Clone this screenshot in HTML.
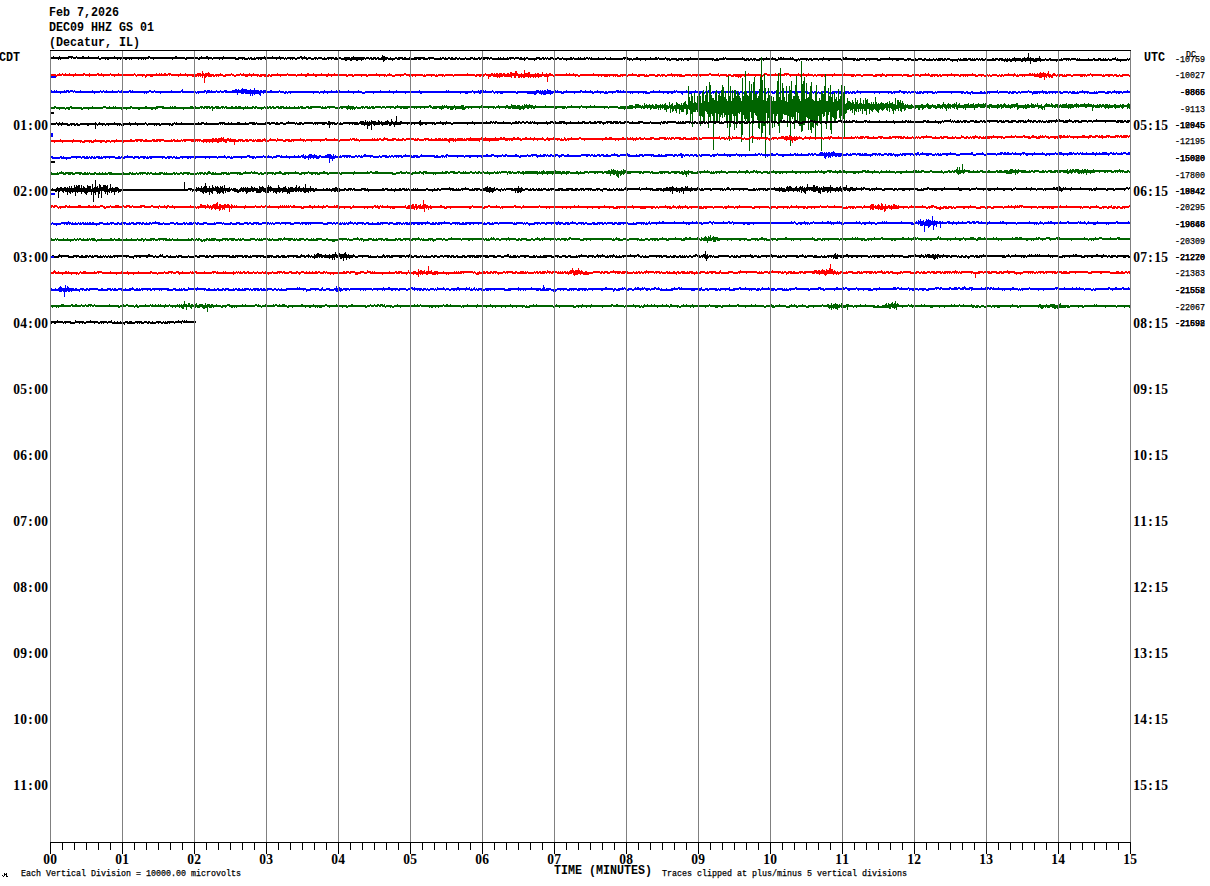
<!DOCTYPE html>
<html><head><meta charset="utf-8"><style>
html,body{margin:0;padding:0;background:#fff;}
body{width:1210px;height:886px;position:relative;overflow:hidden;}
.mb{position:absolute;font-family:"Liberation Mono",monospace;font-weight:bold;font-size:13px;line-height:13px;white-space:pre;transform:scaleX(0.897);transform-origin:0 0;margin-top:-1px;margin-left:-1px;color:#000}
.sd{position:absolute;font-family:"Liberation Serif",serif;font-weight:bold;font-size:13.5px;line-height:14px;white-space:pre;margin-top:-3px;margin-left:-1px;transform:scaleY(1.12);transform-origin:0 0;color:#000}
.sd span{display:inline-block;width:7px;text-align:center}
.sm{position:absolute;font-family:"Liberation Mono",monospace;font-size:9.5px;line-height:9px;white-space:pre;transform:scaleX(0.877);transform-origin:0 0;margin-top:0px;margin-left:-1px;color:#000;-webkit-text-stroke:0.25px #000}
</style></head><body>
<svg width="1210" height="886" style="position:absolute;left:0;top:0"><path d="M50 57h3V56h1V57h5V56h1V57h8V56h5V57h3V56h1V57h5V56h2V57h4V56h1V57h9V56h1V58h2V57h13V56h1V57h33V56h2V57h25V56h2V57h8V58h1V57h12V58h1V57h2V56h1V57h4V56h2V57h4V58h1V57h10V56h1V57h12V58h2V57h7V58h3V57h1V58h1V57h2V58h2V57h1V58h1V57h8V56h1V57h7V56h1V57h6V56h1V57h4V58h1V57h1V58h1V57h8V58h2V57h3V56h2V57h2V56h1V57h2V58h1V57h3V58h3V57h3V58h1V57h4V58h2V57h1V58h2V57h7V58h1V57h2V58h2V57h2V58h3V57h6V58h1V57h2V56h1V57h11V58h1V57h3V58h1V57h2V58h1V57h3V58h1V57h2V58h2V57h1V55h1V56h2V57h3V58h2V57h1V58h4V57h2V58h1V57h5V58h1V57h2V58h3V57h1V58h4V57h11V58h3V57h6V58h6V57h1V58h1V57h2V58h1V57h1V58h2V57h2V58h1V57h2V58h2V57h2V58h2V57h1V58h5V57h1V58h4V57h3V58h1V57h1V58h3V57h2V58h1V57h8V58h1V57h2V58h6V57h1V58h1V57h1V58h2V57h1V58h3V57h1V58h1V57h5V58h1V57h4V58h1V57h2V58h2V57h1V58h1V57h2V58h8V57h4V58h2V57h2V58h1V57h1V58h1V57h1V58h2V57h3V58h4V57h2V58h3V57h1V58h7V57h2V58h1V57h1V58h4V57h1V58h1V57h1V58h3V57h1V58h1V57h2V58h1V57h1V58h1V57h1V58h6V57h1V58h6V57h1V58h4V57h1V58h12V57h5V58h4V59h1V58h3V57h2V58h12V57h1V58h4V57h2V58h1V57h1V58h6V57h1V58h4V59h1V58h6V59h1V58h5V59h1V58h6V57h1V58h23V59h2V58h2V59h1V58h4V57h1V58h1V57h1V58h16V57h1V58h2V59h1V58h3V59h1V58h2V59h1V58h3V59h3V58h7V57h1V58h5V57h1V58h3V59h2V57h1V58h1V57h2V58h1V57h1V58h6V57h1V58h1V57h1V58h1V59h4V58h1V59h1V58h8V59h1V58h3V59h1V58h5V59h1V58h4V57h1V58h17V59h1V58h1V57h1V58h1V57h2V58h9V59h1V58h1V59h1V58h6V59h1V58h12V59h2V58h9V57h1V58h14V59h3V58h4V59h3V58h2V59h2V58h4V59h2V58h2V59h3V58h1V59h3V58h1V59h2V58h1V59h1V58h5V59h1V58h2V59h1V58h3V59h8V58h1V59h1V58h1V59h2V58h4V59h1V58h3V59h1V58h1V59h1V58h1V59h1V58h2V59h1V58h1V59h1V58h2V59h2V58h2V59h5V58h2V59h1V58h3V59h1V58h4V59h2V58h1V59h1V58h1V59h1V58h1V59h2V58h2V57h1V58h6V59h1V58h2V57h1V58h2V57h1V53h1V58h1V57h1V58h3V59h1V58h4V56h1V58h1V59h4V58h1V59h3V58h2V59h7V58h1V59h2V58h1V59h1V58h7V59h1V58h5V59h1V58h1V59h1V58h1V59h8V58h1V59h4V58h2V59h3V58h3V59h2V58h1V59h1V58h1V59h2V58h1V59h3V58h3V57h1V59h1V58h1V59h9V58h1V59h1V58h1V60h-1V61h-1V60h-1V61h-6V62h-1V61h-4V60h-4V61h-3V60h-1V61h-8V60h-1V61h-5V60h-1V61h-17V60h-5V61h-1V60h-1V61h-1V60h-1V61h-1V60h-3V61h-6V62h-1V61h-6V60h-1V61h-3V60h-1V61h-4V62h-1V61h-3V62h-4V61h-2V64h-1V61h-4V62h-1V61h-2V62h-2V61h-5V62h-1V61h-3V62h-2V61h-2V62h-2V61h-1V62h-1V61h-3V60h-1V61h-2V60h-2V61h-10V60h-1V61h-3V60h-1V61h-1V60h-1V61h-1V60h-2V61h-6V60h-2V61h-9V60h-1V62h-1V61h-4V62h-1V61h-2V60h-3V61h-1V60h-1V61h-3V60h-1V61h-4V60h-1V61h-2V60h-1V61h-7V60h-1V61h-3V60h-4V61h-3V60h-1V61h-3V60h-2V61h-1V60h-1V61h-3V60h-5V61h-3V60h-3V61h-1V60h-11V61h-4V60h-7V61h-1V60h-2V61h-2V60h-5V61h-4V60h-1V61h-2V60h-10V61h-2V60h-11V61h-2V60h-5V61h-1V60h-3V61h-1V60h-5V61h-2V60h-2V61h-1V60h-1V61h-1V60h-6V61h-1V60h-1V61h-1V62h-1V61h-2V60h-16V61h-3V60h-11V61h-1V60h-3V61h-4V60h-1V61h-1V60h-1V61h-1V60h-2V61h-2V60h-1V61h-3V60h-18V59h-1V60h-6V61h-5V60h-1V61h-1V60h-23V61h-2V60h-3V61h-1V60h-1V61h-1V60h-2V61h-3V60h-5V61h-2V60h-1V61h-1V60h-1V59h-1V60h-6V59h-1V60h-12V61h-1V60h-4V61h-1V60h-7V61h-1V60h-2V61h-1V60h-2V59h-2V60h-1V59h-1V60h-17V59h-1V60h-15V59h-1V60h-1V59h-2V60h-12V59h-1V60h-6V61h-1V60h-3V59h-1V60h-3V59h-2V60h-4V59h-2V60h-3V59h-1V60h-1V59h-1V60h-2V59h-1V60h-3V59h-2V60h-2V61h-1V60h-6V59h-2V60h-1V61h-1V60h-5V59h-4V60h-1V59h-3V60h-1V59h-1V60h-17V59h-2V60h-1V59h-1V60h-1V59h-2V60h-2V59h-2V60h-2V59h-1V60h-5V59h-2V60h-5V59h-1V60h-5V59h-1V60h-2V59h-1V60h-6V59h-2V60h-4V59h-2V60h-8V59h-4V60h-1V59h-1V60h-5V59h-2V60h-3V59h-1V60h-15V59h-2V60h-3V59h-2V60h-2V61h-1V60h-4V59h-1V60h-2V61h-1V62h-1V60h-5V59h-1V60h-2V59h-1V60h-3V59h-1V60h-1V59h-3V60h-1V59h-1V60h-2V61h-1V60h-3V61h-2V60h-4V61h-2V60h-3V61h-2V60h-4V59h-2V60h-5V59h-2V60h-1V59h-2V60h-1V59h-1V60h-5V59h-4V60h-1V59h-1V60h-1V59h-1V60h-3V59h-3V60h-2V59h-3V60h-1V59h-1V58h-1V59h-3V60h-2V59h-2V60h-1V59h-1V60h-1V59h-3V60h-1V59h-1V60h-1V59h-3V60h-1V59h-3V60h-1V59h-10V60h-1V59h-3V60h-2V59h-1V60h-1V59h-2V60h-5V59h-1V60h-1V59h-1V60h-4V59h-1V60h-1V59h-3V60h-4V59h-12V60h-1V59h-2V60h-1V59h-6V60h-1V59h-3V60h-1V59h-8V60h-2V59h-11V60h-2V59h-12V60h-1V59h-18V60h-1V59h-3V58h-1V59h-3V60h-1V59h-1V60h-1V59h-1V60h-1V59h-2V60h-1V59h-6V60h-1V59h-1V60h-1V59h-2V60h-2V59h-4V60h-1V59h-2V60h-1V59h-8V60h-2V59h-1V60h-1V59h-4V60h-2V59h-22V58h-1V59h-3V58h-1V59h-1V58h-2V59h-8V60h-1V59h-1V60h-1V59h-8z" fill="#000000" shape-rendering="crispEdges"/><path d="M50 74h6V75h1V74h2V73h1V74h2V73h1V74h2V73h1V74h3V73h1V74h5V73h1V74h7V73h2V74h4V73h1V74h7V73h2V74h2V73h1V74h8V73h1V74h7V73h1V74h15V73h1V74h1V75h1V74h8V75h1V74h10V73h1V74h2V73h1V74h1V73h1V74h2V73h2V74h2V73h3V74h9V73h1V74h4V73h1V74h11V73h4V74h1V71h1V73h1V74h1V73h3V72h1V73h1V74h4V75h1V74h5V73h1V74h2V75h2V74h6V73h1V74h2V75h2V74h4V73h1V74h2V73h1V74h5V73h1V74h3V73h1V74h5V75h1V74h6V75h2V74h2V75h1V74h6V73h1V74h9V73h1V74h8V75h1V74h4V73h1V74h5V73h2V74h4V73h1V74h7V73h1V74h6V73h1V74h5V73h1V74h3V73h1V74h8V75h1V74h5V75h1V74h13V75h1V74h8V73h1V74h9V75h1V74h2V73h1V74h2V75h3V74h9V73h2V74h4V75h1V74h12V75h1V74h1V75h1V74h9V75h1V74h1V75h1V74h6V75h1V74h8V75h1V74h13V73h1V74h7V75h1V74h9V73h1V74h5V73h2V74h1V73h1V74h1V73h2V74h1V73h3V74h1V73h2V74h2V73h2V74h1V72h2V73h3V71h2V73h1V74h3V73h1V74h2V70h1V73h3V72h2V74h5V73h1V74h1V73h2V74h3V72h1V74h3V73h1V74h2V73h2V74h2V75h1V74h12V73h1V74h2V73h1V74h3V73h1V74h4V75h2V74h13V73h1V74h24V75h2V74h7V75h1V74h4V73h1V74h4V75h1V74h7V75h1V74h1V75h2V74h6V75h2V74h3V75h1V74h4V75h2V74h4V73h1V74h10V75h3V74h6V75h1V74h17V73h2V74h7V73h1V75h1V74h7V75h1V74h3V75h2V74h12V75h1V74h2V73h1V74h13V75h1V74h1V73h3V74h8V73h1V74h3V73h1V74h4V73h5V74h9V73h1V74h2V73h1V74h1V73h1V74h4V73h1V74h4V75h1V74h2V75h1V74h17V73h1V74h9V73h1V74h10V75h1V74h5V75h2V74h10V75h2V74h7V73h1V74h2V75h1V74h16V75h1V74h6V75h3V74h7V75h1V74h5V73h1V74h2V73h1V74h1V75h1V74h7V75h1V74h2V75h1V74h9V73h1V74h7V75h1V74h12V73h1V74h3V75h2V74h6V75h2V74h2V75h1V74h1V75h2V74h5V75h2V74h1V75h1V74h2V75h1V74h4V73h1V74h5V73h1V74h1V75h1V74h1V75h1V74h10V73h2V74h1V73h1V74h1V73h1V74h2V73h1V74h1V73h1V72h1V73h2V72h1V73h2V74h1V73h1V71h1V74h2V75h1V74h1V73h2V74h1V75h1V74h6V75h1V74h1V75h1V74h5V75h2V74h13V75h1V74h3V73h1V74h11V75h1V74h1V75h1V74h8V75h1V74h3V75h2V74h1V75h2V74h7V75h1V77h-1V76h-6V77h-3V76h-1V77h-3V76h-2V77h-1V76h-3V77h-2V76h-3V77h-3V76h-9V77h-1V76h-1V75h-1V76h-3V77h-1V76h-1V77h-1V76h-1V77h-3V76h-7V77h-2V76h-4V77h-5V76h-2V77h-1V76h-2V77h-1V76h-3V78h-2V77h-1V78h-1V77h-1V76h-1V78h-1V77h-1V80h-1V77h-2V78h-3V77h-5V76h-9V77h-1V76h-1V77h-1V76h-3V77h-3V76h-2V77h-1V76h-9V77h-1V76h-1V77h-2V76h-1V77h-2V76h-5V77h-2V76h-1V77h-1V76h-1V77h-3V76h-2V77h-1V76h-3V77h-3V76h-7V77h-1V76h-1V77h-1V76h-1V77h-1V76h-2V77h-2V76h-4V77h-1V76h-6V77h-1V76h-5V77h-2V76h-1V77h-2V76h-2V77h-1V76h-1V77h-3V76h-9V77h-2V76h-7V77h-5V76h-4V77h-1V76h-9V77h-1V76h-5V77h-2V76h-3V77h-2V76h-3V77h-4V76h-10V77h-2V76h-5V77h-1V76h-1V77h-3V76h-18V77h-1V76h-6V77h-2V76h-1V77h-2V76h-4V77h-1V76h-2V77h-1V76h-6V77h-1V76h-5V77h-1V76h-9V77h-1V76h-1V75h-2V76h-1V75h-1V76h-18V75h-2V76h-2V77h-1V76h-1V77h-1V76h-4V77h-1V76h-9V77h-2V76h-2V77h-1V78h-1V77h-1V78h-1V77h-3V76h-1V77h-3V76h-3V77h-2V76h-6V77h-1V76h-8V75h-2V76h-8V77h-1V76h-3V77h-1V76h-4V77h-1V76h-6V77h-6V76h-1V77h-1V76h-2V77h-1V76h-1V77h-1V76h-5V77h-2V76h-2V77h-1V76h-1V77h-1V76h-2V77h-3V76h-6V77h-5V76h-4V77h-3V76h-9V77h-1V76h-4V77h-1V76h-1V77h-4V76h-1V77h-1V76h-1V77h-1V76h-3V77h-1V76h-1V77h-4V76h-2V77h-1V76h-2V77h-1V76h-18V77h-2V76h-2V77h-1V76h-21V77h-1V76h-4V77h-1V82h-1V77h-3V76h-2V77h-3V78h-1V77h-2V78h-1V77h-1V78h-1V77h-2V78h-1V77h-1V78h-1V77h-3V78h-2V77h-1V78h-1V77h-1V78h-2V76h-2V78h-2V76h-2V78h-1V77h-7V76h-1V77h-3V78h-1V77h-1V78h-1V77h-4V76h-2V77h-2V79h-1V76h-2V75h-1V76h-1V77h-1V76h-2V77h-2V76h-2V77h-2V76h-21V77h-1V76h-8V77h-1V76h-1V77h-1V76h-4V77h-3V76h-3V77h-1V76h-5V77h-3V76h-7V77h-1V76h-2V77h-1V76h-1V77h-2V76h-3V75h-2V76h-3V77h-1V76h-5V77h-3V76h-5V77h-1V76h-1V77h-1V76h-4V77h-1V76h-11V77h-2V76h-4V77h-1V76h-7V77h-2V76h-4V77h-2V76h-14V77h-1V76h-3V77h-2V76h-9V77h-2V76h-8V77h-2V76h-8V77h-1V76h-8V75h-1V76h-6V77h-1V76h-8V77h-2V76h-1V77h-5V76h-2V77h-3V76h-1V77h-1V76h-5V77h-1V76h-3V77h-3V76h-4V75h-1V76h-4V77h-2V76h-2V75h-1V76h-5V77h-3V76h-4V77h-1V76h-1V77h-1V76h-1V77h-2V76h-1V77h-4V76h-1V77h-1V78h-1V83h-1V76h-1V78h-1V76h-1V77h-1V76h-1V77h-1V76h-1V77h-5V76h-4V77h-1V76h-8V77h-1V76h-7V75h-1V76h-1V75h-1V76h-15V77h-3V76h-3V77h-1V78h-1V76h-2V77h-1V76h-5V77h-1V76h-1V75h-1V76h-19V77h-1V76h-3V75h-1V76h-6V77h-1V76h-5V75h-1V76h-7V77h-1V76h-4V75h-1V76h-10V77h-1V76h-10V75h-1V76h-5V77h-1V76h-2V77h-1V76h-3z" fill="#ff0000" shape-rendering="crispEdges"/><path d="M50 90h2V91h2V90h1V91h1V90h1V91h7V90h1V91h1V90h3V91h1V90h3V91h1V90h1V91h5V90h1V91h11V90h1V91h7V90h1V91h2V90h1V91h2V90h1V91h5V90h1V91h5V90h1V91h2V90h1V91h7V90h2V91h1V90h1V91h16V90h2V91h3V90h1V91h16V90h1V91h9V90h1V89h1V91h11V92h1V91h1V92h1V91h7V90h2V91h1V90h3V91h1V90h1V91h4V90h1V91h3V90h1V91h3V90h3V91h5V90h3V89h2V90h1V89h1V90h2V89h1V88h1V89h4V90h3V89h1V90h3V88h1V90h4V91h1V90h2V91h1V90h3V89h1V91h3V90h2V91h7V90h1V91h4V92h1V91h2V92h1V91h31V92h1V91h4V90h1V91h6V90h1V91h4V90h1V91h1V90h2V91h8V90h1V91h9V90h1V91h3V92h3V91h15V90h1V91h8V90h1V91h6V90h1V91h13V90h1V91h8V90h1V91h26V90h1V91h1V90h1V91h23V90h1V91h5V90h1V91h1V90h2V91h1V90h1V91h1V90h1V91h6V90h1V91h1V92h1V91h21V92h1V91h19V90h3V91h1V90h1V91h1V90h1V91h1V90h2V91h1V89h1V90h3V91h4V90h1V91h1V90h1V91h4V92h1V91h3V90h1V91h13V90h2V91h3V90h1V91h4V90h1V91h2V92h1V91h3V90h1V91h6V92h1V91h2V92h1V91h8V90h3V91h1V90h1V91h2V90h1V91h23V92h3V91h3V90h1V91h5V90h1V91h14V90h1V91h1V90h1V91h9V90h1V91h1V92h1V91h6V90h1V91h2V92h1V91h4V92h2V91h3V90h1V91h1V92h2V91h4V90h1V91h4V90h1V91h13V92h1V91h3V92h1V91h2V92h2V91h9V90h1V91h6V90h1V91h5V92h1V91h3V92h1V91h2V92h1V91h3V92h1V91h1V92h1V91h22V92h3V91h3V92h2V91h3V92h1V91h3V92h1V91h1V92h3V91h7V92h1V91h1V92h1V91h9V92h4V91h4V92h1V91h1V92h1V91h3V92h1V91h1V90h1V91h34V92h1V91h6V90h2V91h6V92h1V91h2V92h1V91h5V92h1V91h1V92h1V91h3V92h1V91h10V92h2V91h1V92h1V91h27V92h2V91h2V92h3V91h2V92h7V91h2V92h2V91h1V92h1V91h11V90h1V92h1V91h9V92h1V91h2V92h1V91h4V92h2V91h2V92h1V91h7V90h1V91h3V92h1V91h9V90h1V91h4V92h1V91h13V92h2V91h5V92h1V91h2V92h1V91h3V92h2V91h1V92h1V91h3V90h1V91h6V92h5V91h1V92h1V91h1V92h1V91h7V92h2V91h4V92h1V91h2V90h1V91h7V92h1V91h4V90h1V91h2V93h-7V94h-1V93h-2V94h-2V93h-1V94h-1V93h-4V94h-1V93h-2V94h-4V93h-7V94h-9V93h-1V94h-1V93h-2V94h-1V93h-5V94h-8V93h-2V94h-1V93h-5V94h-3V93h-4V94h-1V93h-2V94h-1V93h-2V94h-1V93h-1V94h-3V93h-1V94h-1V93h-3V94h-1V93h-1V94h-5V95h-1V93h-3V92h-1V93h-7V94h-1V93h-2V94h-2V93h-2V94h-3V93h-1V94h-2V93h-9V94h-1V93h-8V94h-1V93h-1V94h-16V93h-1V95h-1V94h-3V93h-1V94h-2V93h-1V94h-2V93h-9V94h-1V93h-14V94h-1V93h-1V94h-3V93h-4V94h-1V93h-3V94h-2V93h-1V94h-5V93h-1V94h-1V93h-3V94h-1V93h-2V94h-1V93h-2V94h-2V93h-2V92h-1V93h-5V94h-1V93h-1V94h-2V93h-2V94h-1V93h-8V94h-1V93h-4V94h-1V93h-13V94h-1V93h-4V94h-2V93h-1V94h-2V93h-1V94h-2V93h-1V94h-8V93h-2V94h-1V93h-1V94h-7V93h-3V94h-1V93h-2V94h-3V93h-1V94h-1V93h-1V94h-1V93h-1V94h-1V93h-1V94h-6V93h-1V94h-4V93h-6V94h-1V93h-3V94h-1V93h-10V94h-1V93h-1V94h-2V93h-1V94h-3V93h-1V94h-1V93h-3V94h-1V93h-5V92h-1V93h-2V94h-1V93h-1V94h-1V93h-3V94h-2V93h-6V94h-2V93h-2V95h-1V94h-1V93h-1V94h-2V93h-2V94h-1V93h-8V94h-1V93h-4V94h-1V93h-4V94h-1V93h-1V94h-2V93h-5V94h-3V93h-1V94h-3V93h-6V94h-4V93h-5V95h-1V94h-1V93h-4V92h-1V93h-3V94h-2V93h-2V94h-2V93h-3V94h-1V93h-13V94h-5V93h-1V94h-1V93h-4V94h-1V93h-5V94h-1V93h-1V94h-1V93h-13V92h-1V93h-3V94h-1V93h-4V94h-4V93h-3V94h-1V93h-6V94h-2V93h-10V92h-1V93h-6V94h-1V93h-10V94h-3V93h-8V94h-2V95h-1V94h-4V95h-3V94h-1V95h-1V94h-2V93h-2V94h-1V95h-2V94h-7V93h-9V94h-2V93h-13V94h-3V93h-2V94h-1V93h-2V94h-1V93h-1V92h-1V93h-11V94h-2V93h-4V94h-1V93h-1V92h-1V93h-4V94h-3V93h-4V94h-1V93h-38V94h-2V93h-14V94h-1V93h-11V94h-1V93h-19V94h-1V93h-8V94h-3V93h-8V94h-1V93h-25V94h-1V93h-3V94h-1V93h-3V94h-1V93h-5V94h-1V93h-22V94h-1V93h-2V94h-1V93h-1V94h-2V93h-4V92h-1V93h-15V94h-1V93h-2V96h-1V95h-1V94h-4V95h-1V94h-1V96h-1V94h-1V96h-1V94h-5V93h-1V94h-3V93h-3V95h-1V93h-12V92h-1V93h-3V92h-1V93h-3V92h-1V93h-9V94h-1V92h-1V93h-6V94h-1V93h-1V94h-1V93h-1V94h-1V93h-12V92h-1V93h-20V94h-1V93h-5V92h-1V93h-3V92h-2V93h-2V94h-1V93h-1V94h-1V93h-14V92h-1V93h-10V92h-1V93h-14V92h-1V93h-2V92h-1V93h-5V94h-1V93h-19V92h-1V93h-1V92h-3V93h-2V92h-1V93h-6V94h-1V93h-9V92h-1z" fill="#0000ff" shape-rendering="crispEdges"/><path d="M50 107h4V106h2V107h9V108h1V107h4V106h2V107h10V108h1V107h9V106h1V107h10V106h3V107h3V106h1V107h3V106h1V107h1V106h1V107h14V106h2V107h13V106h2V107h9V106h8V107h6V106h1V107h1V106h1V107h1V106h2V107h14V106h3V107h1V104h1V106h1V107h4V106h3V107h1V106h6V107h1V106h2V107h2V106h4V107h2V106h3V107h1V106h2V107h4V106h2V107h2V106h2V107h1V106h3V107h4V106h1V107h1V106h1V107h4V106h2V107h1V106h2V107h7V106h1V107h2V106h1V107h1V106h2V107h1V106h2V107h2V106h3V107h1V106h4V107h2V106h1V107h2V106h1V107h4V106h1V107h3V106h1V107h1V106h3V107h3V106h3V107h1V106h11V107h1V106h1V107h2V106h1V107h1V106h8V107h3V106h1V107h1V106h8V105h1V106h5V107h2V106h1V107h4V106h3V107h1V106h3V107h1V106h1V107h1V106h3V107h1V106h6V107h1V106h3V107h1V106h8V107h1V106h2V105h1V106h31V105h2V106h1V107h1V106h9V105h1V106h1V105h1V106h1V105h1V106h7V105h1V106h6V105h3V107h1V106h16V105h1V106h13V107h1V106h2V105h1V106h7V105h2V106h3V104h1V105h4V106h1V105h3V106h2V105h1V106h1V104h1V105h1V104h1V105h2V104h1V105h3V106h2V105h1V106h9V105h1V106h20V107h1V106h4V105h1V106h9V105h1V106h8V105h1V106h3V105h1V106h13V107h1V106h9V107h2V106h9V105h4V106h2V104h4V105h2V106h1V105h1V106h1V103h1V105h1V104h1V105h2V104h1V105h2V104h1V105h1V106h1V104h2V105h3V104h1V105h1V104h1V105h1V104h1V103h1V105h2V106h1V102h1V105h1V104h1V103h1V106h1V105h2V102h1V103h1V104h2V105h1V103h1V105h1V103h1V102h1V101h1V104h1V105h1V86h1V97h1V101h1V94h1V96h1V103h1V93h1V102h1V103h1V96h1V97h1V94h1V96h1V103h1V92h1V90h1V101h1V95h1V86h1V92h1V102h1V82h1V85h1V95h1V98h2V100h1V92h1V90h1V101h1V95h1V93h1V96h1V90h1V85h1V87h1V97h1V91h1V99h1V101h1V76h1V96h1V86h1V101h1V90h1V98h1V90h2V96h1V91h1V93h1V96h1V98h1V101h1V78h1V96h1V91h1V71h1V91h1V95h1V96h1V81h1V92h1V84h1V100h1V82h1V77h1V94h1V92h1V98h1V96h1V89h1V77h1V57h1V80h1V100h1V74h1V88h1V101h1V98h1V88h1V95h1V96h2V101h1V97h1V101h2V90h1V81h1V73h1V97h1V68h1V100h1V83h1V88h1V97h1V101h1V86h1V102h1V94h1V86h1V90h1V81h1V99h1V96h2V85h1V76h1V92h1V96h1V99h1V101h1V61h1V84h1V81h1V77h1V99h1V83h1V98h1V97h1V92h1V86h1V82h1V99h1V100h1V101h1V92h1V85h1V101h2V98h1V100h1V91h1V93h1V94h1V86h1V74h1V101h2V88h1V96h1V85h1V97h1V94h1V102h1V92h1V99h1V97h1V101h1V89h1V99h1V96h1V85h1V96h1V93h1V86h1V104h1V103h1V98h1V101h2V102h1V103h1V100h1V102h1V104h1V98h1V102h1V100h1V104h1V103h1V98h1V103h1V104h1V100h1V104h1V98h1V100h1V99h1V103h2V104h1V102h1V104h1V102h1V104h1V97h1V102h1V104h1V103h1V104h1V103h1V102h1V103h2V104h1V103h2V102h1V104h1V101h1V103h2V102h1V104h2V98h1V105h1V100h2V102h1V100h1V103h1V101h1V103h1V105h1V104h1V105h1V104h1V105h3V104h1V105h1V106h1V104h1V105h6V104h2V105h3V104h1V103h1V104h1V105h3V104h1V105h3V106h1V104h3V105h2V104h1V102h1V104h2V105h1V104h1V103h1V104h2V105h1V104h2V103h1V104h1V102h1V105h1V104h1V103h1V105h4V104h4V103h1V105h1V104h3V103h1V105h1V104h3V103h1V104h4V103h1V104h1V103h1V101h1V105h2V104h3V105h5V104h2V105h1V104h2V105h1V104h1V103h1V104h1V105h2V104h1V105h2V104h5V103h2V105h7V104h1V105h1V104h2V105h2V103h1V104h2V105h1V104h1V105h1V103h1V105h3V104h1V106h2V105h1V104h1V103h1V104h3V105h1V103h1V104h1V105h2V104h3V105h2V104h1V105h1V104h4V103h1V105h1V104h5V105h1V104h2V103h1V104h2V105h1V104h4V103h1V104h3V103h1V104h3V105h1V104h1V105h3V104h1V105h1V104h2V105h1V104h2V105h1V104h3V105h1V104h1V105h4V104h2V105h4V104h1V105h1V104h2V105h3V104h1V103h1V104h1V109h-1V108h-1V109h-1V107h-3V108h-1V109h-1V108h-1V107h-1V108h-4V109h-1V108h-1V107h-1V108h-4V109h-1V108h-2V109h-1V108h-1V107h-2V108h-1V107h-1V108h-5V107h-1V108h-1V111h-1V107h-5V108h-2V107h-6V108h-1V107h-1V108h-1V107h-2V108h-3V109h-1V108h-1V109h-1V108h-7V107h-1V108h-3V107h-1V108h-2V107h-1V108h-1V107h-7V110h-1V108h-1V110h-1V109h-1V108h-2V109h-1V107h-3V108h-4V107h-1V108h-3V109h-2V108h-1V109h-1V108h-4V109h-1V110h-1V107h-2V108h-1V107h-1V108h-2V109h-1V108h-5V107h-1V108h-2V109h-1V107h-1V108h-2V109h-1V108h-6V107h-1V109h-1V108h-3V107h-1V108h-5V107h-2V108h-3V110h-1V108h-8V110h-1V108h-1V109h-1V108h-5V110h-1V109h-1V107h-1V109h-1V108h-2V107h-1V109h-1V108h-1V109h-1V108h-1V111h-1V109h-1V108h-1V107h-1V109h-1V108h-1V109h-1V108h-3V109h-2V108h-2V107h-1V108h-1V109h-3V108h-1V107h-1V108h-2V109h-1V110h-1V108h-2V110h-2V108h-2V109h-2V108h-2V109h-4V108h-2V110h-1V111h-1V109h-2V112h-1V111h-1V108h-1V111h-1V109h-2V111h-1V110h-1V114h-1V111h-1V109h-1V108h-1V112h-1V108h-1V111h-1V110h-1V108h-1V109h-1V110h-1V111h-1V110h-1V109h-1V110h-1V113h-1V112h-1V111h-1V110h-1V109h-1V110h-1V112h-1V111h-1V110h-1V114h-1V109h-2V115h-1V111h-2V109h-1V114h-1V109h-1V111h-1V109h-1V112h-1V109h-1V112h-1V111h-1V115h-1V109h-1V113h-1V110h-1V111h-1V109h-1V110h-2V113h-1V114h-1V137h-1V119h-1V113h-1V116h-1V120h-1V118h-1V110h-1V111h-1V119h-1V122h-1V121h-1V118h-1V117h-1V134h-1V130h-1V112h-1V115h-1V121h-1V129h-1V112h-1V116h-1V117h-1V114h-1V151h-1V124h-1V122h-1V116h-1V126h-1V125h-1V137h-1V122h-1V128h-1V127h-1V133h-1V130h-1V119h-1V130h-1V118h-1V117h-1V121h-1V125h-2V131h-1V132h-1V126h-2V113h-1V121h-1V112h-1V122h-1V129h-1V117h-1V119h-1V117h-1V146h-1V121h-1V116h-1V127h-1V115h-3V114h-1V119h-1V122h-1V123h-1V133h-1V126h-1V114h-1V116h-1V121h-1V127h-1V114h-1V128h-1V123h-1V137h-1V135h-1V118h-1V124h-1V113h-1V158h-1V126h-2V133h-1V138h-1V123h-1V129h-1V128h-1V120h-1V116h-1V115h-1V113h-1V124h-1V143h-1V118h-1V112h-1V151h-1V122h-2V119h-1V121h-1V119h-1V115h-1V135h-1V142h-1V112h-1V114h-1V113h-1V123h-1V128h-1V116h-1V130h-1V116h-1V114h-1V121h-1V127h-1V141h-1V115h-1V128h-1V121h-1V115h-1V117h-1V113h-1V118h-1V115h-1V117h-1V123h-1V114h-1V123h-1V122h-1V113h-1V121h-1V150h-1V116h-1V114h-1V121h-1V117h-1V128h-1V114h-1V112h-1V111h-1V122h-1V121h-1V117h-1V116h-1V126h-1V116h-1V111h-1V112h-1V110h-1V112h-3V127h-1V114h-1V123h-1V110h-1V109h-1V114h-1V115h-1V109h-2V112h-3V110h-1V114h-1V109h-2V113h-1V111h-1V109h-1V111h-1V112h-1V109h-1V113h-1V108h-1V109h-2V112h-1V110h-2V108h-1V109h-1V108h-1V110h-1V108h-1V110h-1V108h-1V109h-4V108h-1V109h-1V110h-1V108h-2V109h-1V108h-2V109h-2V108h-1V109h-1V108h-5V109h-1V108h-2V109h-8V110h-1V109h-6V108h-9V109h-1V108h-3V109h-1V108h-17V109h-1V108h-4V107h-1V108h-1V109h-1V108h-12V109h-1V108h-1V109h-3V108h-5V109h-2V108h-20V109h-2V108h-1V109h-1V108h-2V109h-2V108h-2V109h-1V110h-1V109h-2V110h-2V109h-7V108h-1V109h-3V108h-2V109h-1V108h-5V109h-1V108h-3V109h-1V108h-1V109h-1V108h-4V109h-1V108h-8V109h-1V108h-7V109h-1V108h-2V109h-1V108h-2V109h-1V110h-3V109h-6V110h-1V108h-1V109h-1V110h-3V108h-1V109h-2V108h-3V109h-2V110h-1V109h-2V108h-2V109h-5V108h-2V107h-1V108h-4V109h-1V108h-3V109h-1V108h-3V109h-1V108h-1V109h-1V108h-6V109h-5V108h-1V109h-2V108h-4V109h-2V108h-3V109h-1V108h-4V109h-1V108h-3V109h-1V108h-6V109h-3V108h-1V109h-4V108h-2V109h-1V108h-1V109h-1V108h-1V109h-4V108h-1V109h-1V110h-1V109h-1V110h-1V109h-1V110h-1V109h-2V110h-1V109h-1V108h-3V109h-2V108h-1V109h-1V108h-1V109h-3V108h-5V109h-1V108h-2V109h-6V108h-9V109h-4V108h-2V109h-5V108h-1V109h-17V108h-1V109h-4V108h-2V109h-3V108h-1V109h-2V108h-1V109h-4V108h-1V109h-2V110h-1V109h-4V108h-1V109h-2V108h-1V109h-9V110h-1V109h-17V108h-1V109h-1V108h-1V109h-1V108h-1V109h-5V108h-1V109h-2V111h-1V108h-1V109h-2V108h-1V109h-2V108h-1V109h-2V108h-1V109h-1V108h-1V109h-16V110h-1V109h-21V108h-4V109h-2V110h-1V109h-2V110h-2V109h-11V110h-2V109h-6V108h-1V109h-4V110h-1V109h-4V110h-1V109h-15V108h-3V109h-14V110h-1V109h-5V110h-2V109h-10V108h-1V110h-2V109h-2V110h-1V109h-5V110h-1V109h-3V108h-1V109h-5z" fill="#006400" shape-rendering="crispEdges"/><path d="M50 123h6V122h1V123h2V122h1V123h2V122h1V123h5V124h2V123h5V124h1V123h2V124h2V123h15V122h1V123h1V124h1V123h1V122h1V123h5V124h1V123h8V122h1V123h6V124h1V123h7V122h1V123h5V122h1V123h9V122h1V123h1V124h1V123h12V124h1V123h10V124h1V123h2V122h1V123h1V122h1V123h4V122h1V123h12V122h1V123h3V122h1V123h2V122h3V123h2V122h1V123h12V122h6V123h3V122h1V123h2V122h1V123h5V122h3V123h5V122h1V123h3V122h6V123h1V122h1V123h8V122h1V123h1V122h3V123h1V122h4V123h1V122h2V123h2V122h3V123h3V122h2V121h1V122h6V123h1V122h1V123h2V122h3V123h2V122h9V123h1V122h13V123h1V121h2V122h5V123h2V122h1V123h2V122h1V123h2V122h15V123h1V122h1V121h4V122h1V120h1V122h1V121h1V122h1V121h1V122h1V120h1V121h4V122h2V120h1V121h1V122h1V121h1V122h3V121h2V120h1V121h1V122h2V119h1V121h1V122h2V121h1V116h1V122h3V121h2V122h17V121h1V120h1V122h14V123h1V122h4V121h1V122h5V121h1V122h4V123h2V122h19V121h1V122h13V121h1V122h3V121h2V122h1V121h1V122h1V121h2V122h6V121h1V122h7V123h1V122h3V121h2V122h1V121h2V122h2V121h2V122h2V121h2V122h2V121h1V122h1V121h1V122h1V121h1V122h11V121h1V122h3V121h3V122h2V121h1V122h3V121h6V122h5V121h1V122h7V121h1V122h3V121h3V122h4V121h2V122h3V121h2V122h1V121h5V122h4V121h6V122h1V121h5V122h1V121h2V122h3V121h5V122h3V121h1V122h5V121h5V122h7V121h1V122h10V121h1V122h1V121h3V122h1V121h9V122h2V121h1V122h1V121h1V122h1V121h2V122h1V121h6V122h1V121h1V122h1V121h2V122h3V121h1V122h1V121h4V122h1V121h1V122h1V121h12V122h1V121h1V122h2V121h11V122h1V121h1V122h1V121h7V122h1V121h1V122h1V121h2V122h1V121h2V120h1V121h10V122h1V121h6V120h1V121h5V122h2V121h1V120h2V121h1V120h2V121h2V120h1V121h4V122h1V121h2V120h2V121h3V122h2V121h8V120h3V121h1V120h1V121h5V122h1V121h17V120h5V121h1V120h1V121h1V120h1V121h2V120h1V121h2V120h3V121h1V120h1V121h7V120h3V121h2V120h1V121h9V120h1V121h6V120h1V121h6V120h1V121h8V120h1V121h2V120h2V121h1V120h1V121h1V120h1V121h12V120h3V121h1V120h2V121h6V120h1V121h6V120h1V121h1V120h6V119h1V121h1V120h1V121h1V120h1V121h2V120h2V121h1V120h1V121h2V120h4V121h3V120h4V121h1V120h2V121h3V120h2V121h1V120h2V121h1V120h12V121h1V120h3V121h1V120h1V121h1V120h4V121h2V120h5V121h2V120h6V121h1V120h1V121h1V120h1V119h1V120h3V121h1V120h3V121h2V120h3V121h1V120h1V121h3V120h1V121h1V120h8V119h1V120h2V119h1V120h4V121h1V120h4V119h1V120h2V121h2V120h5V121h2V120h6V121h1V120h4V121h1V120h3V119h1V120h19V121h1V120h6V121h1V120h2V121h1V120h3V122h-1V123h-3V122h-2V123h-4V122h-1V123h-3V122h-10V123h-1V122h-12V123h-1V122h-4V123h-1V122h-5V123h-4V122h-2V123h-1V122h-1V123h-2V122h-4V123h-5V122h-7V123h-1V122h-3V123h-1V122h-1V123h-3V122h-1V123h-3V122h-1V123h-1V122h-1V123h-1V122h-1V123h-2V122h-2V123h-2V122h-1V123h-1V122h-3V123h-4V122h-2V123h-1V122h-1V123h-3V122h-3V123h-5V122h-3V123h-4V122h-2V123h-2V122h-7V123h-1V122h-3V123h-2V122h-1V123h-1V122h-2V123h-6V122h-4V123h-3V122h-1V123h-2V122h-1V123h-2V122h-1V123h-5V122h-1V123h-1V122h-1V123h-1V122h-7V123h-1V122h-1V123h-1V124h-1V123h-1V124h-1V123h-12V122h-2V123h-17V122h-1V123h-11V124h-1V123h-27V122h-1V123h-1V122h-1V123h-9V122h-2V123h-12V122h-3V123h-11V124h-2V123h-4V124h-1V123h-4V124h-1V123h-2V122h-3V123h-7V124h-5V123h-4V124h-2V123h-1V124h-1V123h-9V122h-1V123h-1V124h-2V123h-2V124h-1V123h-9V124h-1V123h-13V124h-1V123h-2V124h-4V123h-3V124h-2V123h-1V124h-3V123h-1V124h-1V123h-5V124h-1V123h-3V124h-5V123h-3V124h-2V123h-5V124h-2V123h-1V124h-2V123h-1V124h-7V123h-1V124h-2V123h-1V124h-1V123h-1V124h-1V123h-3V124h-10V123h-8V124h-2V123h-1V124h-3V123h-1V125h-1V124h-9V123h-1V124h-7V123h-3V124h-11V123h-4V124h-5V123h-1V124h-4V123h-1V124h-4V123h-2V124h-1V123h-1V124h-2V125h-1V124h-1V123h-1V124h-2V123h-2V124h-7V123h-1V124h-5V123h-1V124h-16V125h-1V124h-3V123h-1V124h-9V123h-2V124h-3V125h-1V124h-9V125h-1V124h-4V123h-1V124h-4V123h-2V124h-2V123h-2V124h-2V123h-1V124h-7V125h-1V124h-14V123h-1V124h-2V123h-1V124h-1V123h-1V124h-16V125h-1V124h-6V125h-1V124h-14V125h-2V124h-5V125h-1V124h-1V125h-2V124h-6V125h-2V124h-1V125h-1V124h-5V125h-2V124h-2V125h-2V126h-1V125h-1V124h-4V125h-1V124h-2V125h-1V124h-3V125h-1V124h-6V125h-6V127h-1V125h-1V124h-1V125h-1V126h-2V124h-1V125h-5V126h-1V125h-1V124h-1V125h-5V126h-1V125h-1V124h-1V130h-1V125h-1V126h-2V129h-1V125h-2V126h-1V125h-3V124h-2V125h-5V124h-1V125h-1V124h-2V125h-1V124h-6V125h-5V124h-1V125h-3V124h-1V125h-1V124h-1V125h-1V128h-1V125h-2V124h-2V125h-3V124h-4V125h-1V124h-1V125h-1V124h-1V125h-1V124h-9V125h-2V124h-1V125h-4V124h-1V125h-1V124h-9V125h-3V124h-3V125h-5V124h-4V125h-2V124h-2V125h-10V124h-1V125h-4V124h-3V125h-25V124h-1V125h-1V124h-1V125h-1V124h-1V125h-15V124h-2V125h-27V124h-1V125h-1V126h-2V125h-1V126h-1V125h-8V126h-2V125h-2V126h-1V125h-1V126h-1V125h-6V126h-1V125h-1V124h-1V125h-7V126h-1V125h-6V126h-1V125h-6V126h-3V125h-1V126h-1V125h-1V126h-1V125h-8V126h-1V125h-2V126h-1V125h-2V126h-1V125h-4V126h-1V125h-1V129h-1V125h-6V126h-2V125h-7V126h-3V125h-1V126h-2V125h-2V126h-1V125h-1V126h-3V125h-5V126h-1V125h-2V126h-1V125h-1V124h-1V125h-6z" fill="#000000" shape-rendering="crispEdges"/><path d="M50 140h10V139h1V140h12V139h1V140h8V141h2V140h8V141h1V140h2V139h1V140h9V141h1V140h4V141h1V140h5V139h1V140h13V139h2V140h3V139h8V140h2V139h2V140h5V139h3V140h1V139h8V140h7V139h1V140h1V139h2V140h2V139h1V140h3V139h1V140h1V139h18V140h2V139h9V138h2V139h1V138h2V139h1V138h3V137h1V138h1V137h1V139h3V138h2V139h1V138h1V139h5V140h2V139h5V140h2V139h3V140h1V139h3V140h1V139h1V140h1V139h1V140h1V139h4V140h1V139h2V138h1V139h2V140h2V139h1V138h1V139h5V140h1V138h1V139h5V140h2V139h5V140h1V139h9V138h1V139h4V140h1V139h19V138h2V139h7V138h1V139h4V140h1V139h10V138h1V139h1V138h3V139h1V138h1V139h2V140h1V139h12V138h1V139h1V138h1V139h2V138h1V139h1V138h2V139h2V138h1V137h1V138h3V139h4V138h4V139h2V138h1V139h3V138h2V139h2V138h8V139h1V138h1V139h1V138h2V139h5V138h5V139h2V138h1V139h3V138h2V139h1V138h3V139h1V138h1V139h1V138h3V139h2V138h5V139h1V138h1V139h1V138h6V139h1V138h1V139h1V138h4V137h1V138h10V137h1V138h3V137h1V138h9V137h1V138h4V137h2V138h1V137h2V138h8V137h2V138h2V137h2V138h2V139h1V138h3V137h2V138h3V137h1V138h3V137h1V138h7V137h1V138h1V139h2V138h1V137h1V138h5V137h1V138h6V139h1V138h1V139h2V137h1V138h1V139h1V138h4V137h1V138h7V137h2V138h24V137h2V138h2V137h3V138h10V137h2V138h2V137h2V138h2V137h1V138h1V137h1V138h3V137h1V138h2V137h2V138h3V137h1V138h5V137h4V138h5V137h7V138h1V137h1V138h1V137h1V138h1V137h3V138h1V137h6V138h2V137h3V138h5V137h1V138h1V137h4V138h2V137h1V138h2V137h17V136h1V138h1V137h4V138h1V137h1V138h1V136h1V137h2V138h1V136h1V137h3V136h1V137h5V138h2V137h1V138h4V137h2V136h3V137h11V138h1V137h2V138h4V137h5V138h1V137h3V136h3V137h1V136h3V137h1V135h1V136h2V137h2V136h1V137h1V136h1V137h2V136h1V137h2V138h2V137h1V136h1V137h4V136h1V137h12V138h1V137h4V136h1V137h1V136h2V137h6V136h1V137h12V136h1V137h3V136h1V137h1V136h1V137h2V136h4V137h1V136h4V137h4V136h1V137h4V136h5V137h6V136h2V137h1V136h10V137h1V136h2V137h2V136h1V137h4V136h1V137h1V136h1V137h1V136h1V137h1V136h1V137h2V136h5V135h1V136h5V137h3V136h1V137h4V136h2V137h1V136h5V137h4V136h1V137h2V136h1V137h5V135h1V136h2V137h2V136h2V137h2V136h1V137h1V136h3V135h1V136h2V137h1V136h2V137h2V136h1V137h1V136h8V135h1V136h9V137h2V136h6V135h1V136h3V135h1V136h7V135h2V136h5V137h1V136h1V135h2V136h3V137h1V136h2V135h1V136h1V135h1V136h2V135h1V136h3V137h1V136h9V135h3V136h1V135h2V136h2V135h1V136h1V135h1V136h12V135h3V136h4V135h3V136h3V135h3V136h1V135h1V136h1V135h2V136h3V135h4V136h5V135h4V136h1V135h2V136h1V135h5V136h1V135h1V137h-1V138h-1V137h-1V138h-6V137h-1V138h-1V137h-1V138h-1V137h-1V138h-6V137h-1V138h-1V137h-1V138h-4V139h-1V138h-4V137h-2V138h-4V137h-1V138h-2V139h-1V138h-10V139h-1V138h-3V139h-1V138h-3V137h-1V138h-8V139h-1V138h-2V139h-1V138h-1V139h-2V138h-4V139h-2V138h-2V137h-1V138h-5V139h-4V138h-5V139h-3V138h-4V137h-1V138h-7V137h-1V138h-10V139h-2V138h-1V139h-1V138h-3V139h-1V138h-5V139h-1V138h-1V139h-3V138h-1V139h-5V138h-1V139h-2V138h-3V139h-2V138h-1V139h-1V138h-1V139h-2V138h-1V139h-3V138h-3V139h-5V138h-1V139h-8V138h-3V139h-3V138h-1V139h-8V138h-8V139h-1V138h-2V139h-2V138h-1V139h-1V138h-1V139h-1V138h-1V139h-1V138h-1V139h-7V138h-1V139h-4V138h-1V139h-1V138h-2V139h-1V138h-3V139h-9V138h-1V139h-2V138h-2V139h-11V138h-2V139h-1V138h-1V139h-5V138h-1V139h-1V138h-1V139h-23V138h-1V139h-1V140h-1V139h-5V140h-1V139h-7V140h-1V139h-5V140h-1V139h-5V140h-2V139h-4V140h-2V141h-2V140h-1V143h-1V141h-1V140h-4V141h-1V140h-2V139h-6V140h-1V139h-3V140h-1V139h-1V140h-1V141h-2V140h-1V139h-1V140h-2V139h-5V140h-1V139h-1V140h-1V139h-4V138h-2V139h-2V140h-4V139h-1V140h-2V139h-10V140h-1V139h-3V140h-1V139h-1V140h-2V139h-3V140h-1V139h-6V140h-1V139h-11V140h-6V139h-1V140h-10V139h-1V140h-5V139h-4V140h-1V139h-2V140h-2V139h-1V140h-1V139h-1V140h-3V139h-4V140h-6V139h-2V140h-7V139h-1V140h-4V139h-1V140h-3V141h-1V140h-1V141h-1V140h-14V141h-1V140h-2V141h-1V140h-12V141h-1V140h-17V141h-1V140h-3V139h-2V140h-10V141h-1V140h-1V141h-2V140h-1V141h-4V140h-2V141h-1V140h-7V141h-2V140h-2V141h-2V140h-6V141h-1V140h-3V141h-1V140h-11V141h-2V140h-7V141h-2V140h-1V141h-1V140h-1V141h-3V140h-6V141h-9V142h-1V141h-6V140h-3V142h-1V141h-11V140h-1V141h-11V142h-1V141h-1V142h-1V141h-3V143h-1V142h-1V141h-20V140h-2V141h-1V140h-1V141h-5V140h-1V141h-4V140h-8V141h-2V140h-1V141h-7V140h-2V141h-7V140h-3V141h-3V140h-2V141h-19V142h-1V141h-5V140h-2V141h-1V140h-1V141h-10V142h-1V141h-13V140h-1V141h-4V142h-1V141h-8V142h-1V141h-5V142h-1V141h-1V142h-1V141h-9V142h-1V141h-1V142h-4V141h-2V142h-3V141h-6V142h-1V141h-7V142h-2V141h-1V142h-1V141h-2V142h-7V141h-1V142h-3V141h-3V142h-3V141h-1V142h-3V141h-1V142h-1V141h-1V142h-4V145h-1V142h-5V141h-2V143h-2V142h-2V141h-1V142h-3V143h-2V142h-4V143h-1V142h-2V143h-1V142h-2V143h-1V142h-2V143h-1V142h-2V141h-1V142h-1V141h-1V142h-1V141h-1V142h-5V141h-5V142h-2V141h-1V142h-1V141h-1V142h-7V141h-1V142h-9V141h-3V142h-2V141h-1V142h-5V141h-1V142h-9V141h-1V142h-2V141h-2V142h-2V141h-1V142h-11V143h-1V142h-8V143h-1V142h-3V143h-1V142h-3V143h-2V142h-3V143h-2V142h-6V143h-3V142h-1V143h-1V142h-4V143h-3V142h-1V143h-1V142h-7V143h-1V142h-9V143h-1V142h-7V143h-1V142h-4z" fill="#ff0000" shape-rendering="crispEdges"/><path d="M50 156h3V157h7V156h2V157h1V156h1V157h7V156h10V157h1V156h3V157h1V156h2V157h1V156h1V157h1V156h2V157h1V156h1V157h1V156h4V157h1V156h1V157h1V156h12V157h3V156h2V157h1V156h1V157h2V156h3V155h1V156h5V157h1V156h5V157h1V156h6V157h1V156h1V157h1V156h16V157h2V156h5V157h1V156h2V157h1V156h1V157h3V156h14V157h1V156h22V157h1V156h6V155h1V156h1V157h1V156h3V157h1V156h1V157h1V156h14V155h3V156h5V157h1V156h7V155h1V156h4V155h1V156h3V157h1V156h3V155h4V156h1V155h1V156h4V155h1V156h7V155h1V156h3V155h1V156h2V155h2V154h1V156h1V155h1V156h2V155h1V154h3V155h2V154h1V155h2V156h2V155h2V156h4V155h2V154h4V155h1V156h1V154h1V156h1V155h1V156h2V157h1V156h1V155h1V156h1V155h9V156h4V155h2V156h1V155h2V156h1V155h1V156h1V155h1V154h2V155h7V156h6V155h1V156h2V155h5V156h2V155h1V156h1V155h2V156h1V155h8V156h1V155h2V154h1V155h4V156h1V155h1V156h1V155h5V156h2V155h1V154h1V155h13V156h1V155h2V156h3V155h3V156h1V155h1V154h2V155h16V156h1V155h17V156h1V155h3V154h2V155h3V154h3V155h8V154h1V155h2V154h2V155h8V154h2V155h2V156h1V155h7V154h1V155h3V154h6V155h3V154h1V155h2V154h3V155h1V154h1V155h2V154h2V155h3V154h3V155h3V154h3V155h3V154h2V155h12V154h9V155h1V154h2V155h1V154h1V155h2V154h3V155h1V154h3V155h2V154h2V155h3V154h3V153h1V154h3V155h2V154h7V153h1V154h2V155h6V154h1V155h2V154h4V155h1V154h10V155h4V154h2V155h1V154h1V155h3V154h8V155h1V154h3V155h1V154h2V153h2V154h2V155h1V154h4V155h1V154h3V155h1V154h3V155h2V154h1V155h1V154h9V155h2V154h5V153h1V154h6V153h1V154h11V153h1V154h18V153h1V154h2V153h2V154h1V153h1V154h9V153h2V154h3V153h2V154h12V153h1V154h3V153h2V154h1V153h1V154h3V153h1V154h6V153h2V154h1V153h2V154h1V153h2V154h3V153h1V152h3V153h1V152h1V153h1V152h1V153h1V152h2V153h1V152h2V151h1V152h1V153h8V154h3V153h2V154h2V153h1V154h1V153h4V154h1V153h4V154h1V153h1V154h1V153h3V154h5V153h5V154h1V153h3V154h3V153h3V154h1V153h4V154h1V153h1V154h6V153h1V154h1V153h11V154h1V153h3V152h2V154h1V153h2V152h1V153h9V154h3V153h1V154h1V153h2V154h1V153h1V154h1V153h8V152h1V153h5V154h4V153h11V152h2V154h3V153h6V152h1V153h1V154h2V153h10V154h1V153h3V152h3V153h1V152h2V153h1V152h2V153h3V152h1V153h2V152h1V153h6V152h3V153h9V152h1V153h7V152h1V153h2V154h1V153h9V152h1V153h3V152h3V153h7V152h3V153h1V152h1V153h3V152h1V153h2V152h1V153h1V152h1V153h3V152h1V153h5V152h2V153h2V152h1V153h2V152h1V153h2V152h5V153h3V152h2V153h1V152h1V153h2V152h1V153h4V152h1V153h1V152h3V153h2V152h2V155h-4V154h-3V155h-6V154h-1V155h-4V154h-2V155h-1V156h-1V155h-12V156h-1V155h-14V154h-1V155h-2V154h-1V155h-3V154h-1V155h-5V156h-1V155h-3V156h-1V155h-7V154h-1V155h-5V156h-1V155h-2V156h-2V155h-12V156h-1V155h-4V156h-2V155h-1V154h-1V155h-1V154h-1V155h-1V156h-1V155h-7V154h-1V155h-9V154h-1V155h-5V156h-1V155h-10V156h-2V155h-8V156h-3V155h-13V156h-4V155h-8V156h-2V155h-4V156h-4V155h-1V156h-1V155h-1V156h-3V155h-3V156h-3V155h-6V156h-1V155h-2V156h-1V155h-2V156h-1V155h-2V156h-1V155h-4V156h-2V155h-1V156h-2V155h-1V156h-2V157h-1V156h-1V157h-1V156h-1V155h-1V156h-3V155h-1V156h-2V155h-3V156h-3V155h-1V156h-1V155h-1V156h-1V155h-1V156h-1V155h-2V156h-2V157h-1V156h-11V155h-2V156h-1V155h-4V156h-4V155h-1V156h-4V155h-1V156h-1V157h-3V156h-1V157h-2V156h-2V157h-1V156h-1V158h-1V157h-1V158h-1V156h-1V157h-1V159h-1V158h-1V156h-8V155h-2V156h-2V155h-1V156h-1V155h-1V156h-14V155h-1V156h-10V157h-2V156h-4V155h-2V156h-8V157h-1V156h-1V157h-1V156h-3V155h-1V156h-1V155h-2V156h-12V157h-1V156h-3V157h-1V156h-1V157h-1V156h-2V155h-1V156h-5V157h-2V156h-1V157h-1V156h-9V155h-1V156h-2V157h-2V156h-1V157h-2V156h-8V157h-2V156h-1V157h-3V156h-2V157h-1V156h-3V157h-1V156h-4V157h-1V156h-1V158h-2V156h-3V157h-1V156h-2V157h-2V156h-6V157h-14V156h-1V157h-1V156h-7V157h-2V156h-2V157h-12V156h-8V157h-3V156h-6V157h-8V156h-2V157h-2V156h-2V157h-4V156h-2V157h-1V156h-2V157h-2V156h-5V157h-17V156h-2V157h-2V158h-1V157h-1V156h-2V157h-4V156h-1V157h-3V156h-1V157h-1V156h-1V157h-7V158h-1V157h-1V156h-3V157h-1V156h-1V157h-3V156h-1V157h-6V158h-2V157h-12V156h-1V157h-3V156h-1V157h-4V158h-1V157h-3V156h-2V157h-9V158h-2V157h-3V158h-1V157h-6V158h-2V157h-4V158h-1V157h-6V158h-1V157h-9V156h-1V158h-1V157h-1V158h-1V157h-1V158h-1V157h-1V158h-7V157h-14V158h-4V157h-1V158h-5V157h-7V158h-2V157h-2V158h-1V157h-1V158h-1V157h-2V158h-1V157h-2V158h-1V157h-1V158h-4V157h-3V158h-2V157h-1V158h-6V157h-2V158h-1V157h-7V158h-3V157h-2V158h-1V157h-2V158h-4V157h-1V158h-1V157h-1V158h-2V157h-1V158h-1V157h-2V158h-3V159h-1V158h-3V159h-2V161h-1V159h-2V163h-1V158h-8V157h-1V158h-1V159h-3V158h-2V159h-1V158h-2V159h-1V158h-1V160h-1V158h-2V159h-2V158h-2V157h-1V158h-11V159h-1V158h-9V157h-3V158h-4V159h-1V158h-8V157h-1V158h-7V159h-1V158h-1V159h-2V158h-3V157h-2V158h-5V159h-1V158h-8V159h-3V158h-3V159h-1V158h-8V159h-1V158h-7V159h-1V158h-3V159h-1V158h-9V159h-2V158h-3V159h-1V158h-1V159h-2V158h-4V159h-1V158h-2V159h-5V158h-2V159h-1V158h-2V159h-2V158h-1V159h-2V158h-2V159h-1V158h-10V159h-2V158h-1V159h-3V158h-1V159h-2V158h-3V159h-2V158h-3V159h-2V158h-8V159h-3V158h-1V159h-6V158h-5V159h-1V158h-3V159h-1V158h-2V159h-5V158h-2V159h-3V158h-1V159h-2V158h-1V159h-5V158h-2V159h-1V158h-4V159h-1V158h-5V159h-4V160h-1V159h-5V158h-1V159h-8V158h-2z" fill="#0000ff" shape-rendering="crispEdges"/><path d="M50 173h1V172h1V173h5V172h1V173h1V172h2V171h1V172h2V173h1V172h8V173h2V172h7V173h2V172h2V173h1V172h1V173h1V172h1V173h4V172h2V173h3V172h1V173h2V172h1V173h2V172h1V173h2V172h4V173h11V172h1V173h5V172h2V173h1V172h1V173h3V172h1V173h2V172h7V173h1V172h2V173h1V172h2V173h3V172h1V173h3V172h4V173h1V172h1V173h1V172h1V173h6V172h2V173h1V172h1V173h3V172h2V173h1V172h7V173h7V172h1V173h1V172h4V173h1V172h2V173h1V172h1V171h2V172h1V173h1V172h2V173h1V172h1V173h5V172h6V173h1V172h1V173h1V172h11V173h2V172h2V171h1V172h5V171h1V172h2V171h1V172h3V173h2V172h2V173h2V172h10V173h1V172h4V171h2V172h1V173h2V172h11V171h1V172h3V173h2V172h7V171h1V172h9V173h1V172h4V171h2V172h3V173h1V172h11V173h1V172h13V171h1V172h12V171h1V172h2V171h2V172h3V171h3V172h15V173h3V172h4V171h2V172h4V171h1V172h3V171h1V173h1V172h3V171h1V172h3V171h2V172h2V171h4V172h15V171h1V172h2V171h3V172h2V171h5V172h3V171h2V172h3V171h1V172h1V171h1V172h4V171h2V172h3V171h1V172h2V171h2V172h2V171h2V172h3V171h1V172h6V171h1V172h2V171h1V172h1V171h1V172h1V171h6V172h1V171h3V172h1V171h1V172h4V171h3V172h2V171h2V172h1V171h13V172h1V171h1V172h1V171h2V170h1V171h1V172h1V171h9V170h1V171h5V172h1V171h3V172h1V171h4V172h6V171h2V172h2V171h1V172h3V171h4V172h1V171h14V172h1V171h4V170h2V171h1V169h1V170h1V169h1V170h2V171h1V170h1V171h3V170h1V171h1V169h1V170h3V171h15V172h1V171h7V172h1V171h2V172h6V171h10V172h2V171h9V172h1V171h2V172h1V170h1V171h3V170h1V171h4V172h4V171h7V170h1V171h2V170h1V171h2V172h1V171h1V172h1V171h1V172h1V171h6V170h1V171h4V172h2V171h9V172h1V171h1V170h1V171h6V170h2V171h1V172h1V171h3V170h2V171h1V170h1V171h4V172h2V171h5V172h1V171h4V170h1V171h18V170h1V171h22V170h1V171h2V170h1V171h2V170h1V171h5V170h5V171h3V170h1V171h3V170h2V171h2V170h2V171h17V170h4V171h1V170h2V171h5V170h1V171h4V172h1V171h1V170h1V171h4V170h1V171h2V170h1V171h5V172h1V171h10V170h1V171h6V170h1V171h1V170h2V171h1V170h1V171h2V170h3V171h6V170h2V171h9V170h1V171h1V172h1V171h4V170h2V171h2V170h1V171h1V170h2V169h1V167h1V170h1V167h1V170h2V164h1V170h1V169h1V170h5V171h3V170h1V171h3V170h1V171h2V170h3V171h3V170h1V171h1V170h2V171h6V170h2V171h1V170h3V171h2V170h4V171h1V170h1V169h3V170h2V169h1V170h2V169h1V170h7V171h3V170h1V171h1V170h2V171h1V170h5V171h3V170h2V171h1V170h1V171h2V170h4V171h2V170h4V169h1V170h8V169h1V171h1V170h1V169h1V170h1V169h2V170h1V169h4V170h3V169h1V170h1V169h2V170h1V169h1V170h5V169h1V170h18V171h2V170h5V169h1V170h4V171h3V170h2V171h1V173h-1V172h-1V173h-4V172h-1V173h-1V172h-1V173h-1V172h-2V173h-1V172h-1V173h-1V172h-1V173h-3V172h-3V173h-1V172h-1V173h-2V172h-4V173h-1V172h-4V173h-4V174h-1V173h-3V175h-1V173h-2V174h-1V173h-1V174h-1V173h-1V174h-2V173h-1V172h-1V173h-2V172h-1V173h-1V174h-1V173h-2V174h-2V173h-4V172h-2V173h-4V172h-1V173h-6V172h-2V173h-2V172h-1V173h-6V172h-4V173h-2V172h-2V173h-10V172h-2V173h-1V174h-1V173h-1V175h-1V173h-3V174h-6V173h-9V172h-1V173h-14V172h-2V173h-12V172h-3V173h-1V174h-1V173h-2V174h-2V175h-1V174h-1V173h-1V172h-1V173h-2V172h-1V173h-3V172h-1V173h-4V174h-1V173h-11V172h-2V173h-6V172h-2V173h-20V174h-2V173h-4V174h-1V173h-15V174h-1V173h-6V174h-1V173h-7V172h-2V173h-4V174h-1V173h-2V174h-3V173h-6V174h-1V173h-8V174h-1V173h-5V172h-1V173h-2V172h-2V173h-2V174h-2V173h-4V172h-1V173h-9V174h-1V173h-2V174h-1V173h-4V174h-1V173h-3V174h-2V173h-8V174h-1V173h-3V174h-1V173h-1V174h-2V173h-2V174h-2V173h-5V174h-3V173h-4V174h-2V173h-3V174h-1V173h-2V172h-1V173h-4V174h-1V173h-3V174h-1V173h-7V174h-1V173h-9V174h-2V173h-6V174h-1V173h-2V174h-1V173h-1V174h-5V173h-9V174h-1V173h-2V174h-7V173h-2V175h-1V174h-1V177h-1V175h-1V174h-1V175h-2V174h-3V173h-2V174h-3V173h-3V174h-3V173h-3V174h-1V173h-1V174h-3V173h-1V174h-7V173h-1V174h-1V173h-6V174h-2V173h-1V174h-2V173h-8V174h-4V173h-2V174h-1V175h-1V174h-1V175h-1V176h-1V174h-1V178h-1V177h-1V176h-1V174h-1V175h-2V174h-2V176h-1V174h-4V173h-2V174h-2V173h-4V174h-1V173h-1V174h-2V173h-5V174h-1V173h-3V174h-6V175h-1V174h-8V173h-1V174h-2V175h-1V174h-4V175h-1V174h-8V175h-1V174h-4V175h-1V174h-4V175h-1V174h-4V175h-1V174h-13V175h-1V174h-3V173h-1V174h-1V173h-1V174h-4V173h-1V174h-3V173h-1V175h-1V173h-6V174h-1V173h-1V174h-4V173h-1V174h-4V175h-1V174h-5V173h-2V174h-2V173h-1V174h-3V173h-1V174h-3V173h-2V174h-10V173h-2V174h-5V173h-3V174h-2V173h-1V174h-11V175h-1V174h-1V175h-1V174h-8V173h-1V175h-1V174h-2V173h-1V174h-7V175h-2V174h-4V173h-1V174h-5V173h-1V174h-4V175h-4V174h-20V173h-2V174h-16V175h-1V174h-11V175h-2V174h-11V175h-2V174h-7V175h-3V174h-1V175h-1V174h-2V175h-2V174h-2V173h-1V174h-3V175h-1V174h-2V175h-3V174h-10V175h-1V174h-2V175h-4V174h-6V175h-2V174h-1V175h-1V174h-4V175h-1V174h-3V175h-3V174h-1V175h-2V174h-6V173h-1V174h-8V175h-4V174h-1V175h-1V174h-7V175h-4V174h-2V175h-1V174h-1V175h-11V174h-3V175h-2V174h-1V175h-2V174h-2V175h-1V174h-1V175h-1V174h-1V175h-7V174h-1V175h-2V174h-3V175h-2V174h-2V175h-3V174h-1V175h-2V174h-1V175h-10V174h-2V175h-9V174h-2V175h-1V174h-1V175h-2V174h-3V175h-1V174h-1V175h-1V174h-1V175h-2V174h-1V175h-5V174h-1V175h-21V174h-1V175h-12V174h-1V175h-5V174h-1V175h-7V174h-1V175h-2V174h-4V175h-3V174h-1V175h-3V174h-2V175h-3V174h-4V175h-9z" fill="#006400" shape-rendering="crispEdges"/><path d="M50 189h2V188h1V189h3V188h1V187h1V188h2V187h2V188h2V187h2V188h1V187h1V188h1V186h1V188h1V186h1V188h2V185h1V187h1V185h1V186h1V185h2V188h1V185h1V188h1V186h1V187h1V188h2V185h1V186h3V189h1V184h1V188h1V187h1V180h1V187h1V186h1V188h1V184h1V185h1V187h2V185h3V186h1V185h1V189h1V188h1V184h1V188h1V187h1V188h2V187h3V188h1V189h65V182h1V189h3V188h4V189h4V187h1V188h1V187h1V188h2V186h1V188h1V187h1V186h1V183h1V186h1V188h2V186h1V188h2V185h1V187h1V188h1V186h1V187h1V186h1V187h1V188h1V186h1V187h1V186h1V188h1V185h1V188h4V187h1V189h1V188h1V189h1V188h3V189h2V190h1V189h1V188h1V187h1V188h1V187h1V188h1V187h1V188h1V187h1V188h3V186h1V187h1V188h1V187h1V188h3V189h1V186h1V187h2V186h1V187h1V188h2V185h1V187h1V185h1V187h1V186h1V187h1V188h6V185h1V187h1V188h3V187h2V186h1V188h1V189h1V187h1V188h1V187h3V188h2V187h1V185h1V188h1V187h1V186h1V188h3V187h1V188h1V184h1V188h4V186h1V188h3V189h1V188h2V189h6V188h1V189h2V188h2V189h1V188h1V189h2V188h3V187h2V188h3V189h4V188h2V189h2V188h4V189h1V188h2V189h6V188h5V189h1V188h1V189h14V188h2V189h1V188h3V189h3V188h1V189h3V188h1V189h3V188h2V189h1V188h3V189h1V188h1V189h1V188h1V189h4V188h1V189h1V188h1V189h1V188h1V189h8V188h2V189h6V188h1V189h2V188h2V189h2V188h8V187h1V188h4V189h2V188h1V189h1V188h1V189h2V188h4V187h1V188h3V189h3V188h1V189h1V188h6V189h3V188h2V187h2V186h1V188h1V187h2V188h3V187h1V189h1V188h2V189h3V188h1V189h2V188h1V189h1V188h7V189h1V188h4V186h1V188h2V187h1V188h1V189h2V188h3V189h2V188h1V189h1V188h2V189h2V188h1V189h1V188h2V189h1V188h1V189h1V188h3V189h2V188h1V189h1V188h4V189h4V188h5V189h3V188h7V189h2V188h3V189h2V188h4V189h1V188h7V189h4V188h4V189h3V188h4V189h2V188h1V189h3V188h1V189h2V188h2V189h1V188h1V189h1V188h1V189h2V188h1V187h1V188h13V187h1V189h1V188h5V187h1V188h6V189h3V188h6V189h1V188h3V187h2V188h1V187h3V186h1V187h1V188h2V187h1V188h4V187h2V188h2V186h1V187h1V186h1V188h3V187h1V188h5V187h1V188h2V189h1V188h2V189h1V188h7V189h1V188h11V189h1V188h1V189h1V188h1V187h2V188h1V189h1V188h17V189h5V188h2V189h1V188h1V189h1V188h8V189h1V188h7V187h1V188h4V187h1V188h1V187h1V188h3V189h1V187h1V186h1V187h1V186h2V187h1V188h3V187h1V186h1V188h2V187h1V186h1V187h1V186h1V188h1V187h1V188h1V187h1V184h1V187h5V185h2V187h1V186h2V188h1V187h1V188h1V187h1V188h1V186h1V187h6V185h1V187h2V188h3V187h2V188h1V187h1V186h1V188h1V187h4V185h1V188h3V187h3V188h3V187h1V188h4V187h1V188h1V187h2V188h5V189h1V188h5V187h1V188h5V189h2V188h9V189h1V188h3V189h1V188h20V189h3V188h1V189h1V188h4V187h2V188h15V187h1V188h13V187h1V188h11V189h1V188h5V187h1V188h9V187h1V188h10V187h1V188h14V189h1V188h2V187h1V188h10V187h1V188h4V187h1V188h4V189h1V188h6V189h1V188h9V187h2V188h1V187h3V186h1V187h1V188h2V187h1V188h1V187h1V188h5V187h1V188h8V187h1V188h11V189h1V188h3V187h1V188h9V189h1V188h7V189h1V188h11V187h2V188h1V187h1V189h-1V190h-1V189h-2V190h-1V191h-1V190h-9V191h-2V190h-5V191h-2V190h-10V191h-2V190h-1V191h-2V190h-1V191h-1V190h-18V191h-1V190h-7V191h-1V192h-1V191h-4V190h-11V191h-1V190h-1V191h-1V190h-6V191h-1V190h-5V191h-1V190h-14V189h-1V190h-2V191h-2V190h-6V191h-2V190h-8V191h-1V190h-3V191h-3V190h-4V191h-1V190h-6V189h-1V190h-5V191h-2V190h-7V191h-3V190h-16V191h-2V190h-4V191h-3V190h-1V191h-1V190h-3V189h-1V190h-4V191h-7V190h-7V191h-1V190h-4V191h-3V190h-4V191h-1V190h-2V191h-2V190h-8V191h-3V190h-7V191h-1V190h-1V191h-1V190h-1V191h-2V190h-4V189h-1V190h-2V191h-1V190h-5V191h-4V190h-1V191h-1V192h-1V191h-2V190h-1V191h-2V190h-1V192h-2V191h-2V192h-1V191h-2V192h-1V191h-4V193h-1V191h-1V192h-1V193h-1V191h-2V192h-3V190h-1V194h-1V193h-2V191h-2V192h-3V191h-2V190h-1V191h-1V190h-1V191h-2V194h-1V193h-1V192h-1V191h-1V193h-1V190h-1V192h-1V191h-1V192h-1V191h-3V192h-1V191h-4V192h-1V191h-2V192h-4V191h-2V192h-1V191h-4V190h-7V191h-3V190h-1V191h-1V190h-3V191h-1V190h-1V191h-1V190h-1V191h-8V190h-4V191h-1V190h-3V191h-1V190h-5V191h-1V190h-2V191h-1V190h-4V191h-1V190h-1V191h-2V190h-1V191h-1V190h-8V191h-2V190h-6V191h-4V190h-3V191h-3V190h-1V191h-2V192h-1V191h-6V194h-1V191h-1V192h-1V191h-1V193h-1V191h-1V192h-2V191h-3V194h-1V191h-1V192h-1V191h-6V192h-1V191h-3V190h-1V191h-7V190h-1V191h-1V190h-9V191h-1V190h-12V191h-1V190h-3V191h-6V190h-2V191h-2V190h-1V191h-6V190h-4V192h-1V191h-2V190h-2V191h-1V190h-1V191h-4V190h-1V191h-1V190h-1V191h-1V190h-3V191h-2V190h-1V191h-1V190h-1V191h-2V190h-1V191h-6V190h-2V191h-8V190h-1V191h-6V190h-2V191h-1V190h-1V191h-4V190h-3V191h-6V190h-1V191h-3V190h-1V191h-4V190h-3V191h-3V192h-1V193h-1V192h-1V193h-2V191h-1V193h-1V191h-4V190h-5V191h-1V190h-1V191h-2V190h-1V192h-1V191h-2V190h-2V191h-2V192h-1V193h-1V192h-2V193h-1V192h-3V191h-6V190h-2V191h-2V190h-1V191h-6V190h-6V191h-1V190h-1V191h-9V190h-1V191h-1V190h-9V191h-2V190h-1V191h-5V192h-1V191h-4V190h-2V191h-17V190h-1V191h-4V190h-2V191h-7V192h-1V191h-7V190h-2V191h-16V192h-1V191h-4V190h-2V191h-8V190h-1V191h-1V190h-1V191h-1V190h-1V191h-3V190h-1V191h-5V192h-3V191h-1V192h-2V191h-2V192h-1V191h-16V192h-2V191h-2V192h-1V191h-1V193h-1V192h-2V193h-2V192h-1V191h-1V192h-2V191h-1V192h-1V191h-1V192h-2V191h-1V192h-4V194h-1V193h-1V194h-1V192h-4V193h-1V191h-1V192h-1V193h-1V192h-2V194h-1V193h-1V192h-1V193h-1V191h-2V192h-1V191h-1V193h-2V192h-1V193h-1V192h-2V191h-1V192h-1V193h-5V191h-2V192h-2V191h-1V192h-3V193h-1V194h-1V192h-1V191h-1V192h-2V191h-1V192h-2V193h-2V192h-3V191h-2V190h-1V191h-1V192h-3V191h-1V193h-1V191h-1V194h-1V193h-1V192h-1V193h-1V194h-1V193h-1V194h-1V192h-1V191h-3V194h-1V193h-1V192h-1V195h-1V192h-2V193h-2V192h-1V194h-1V193h-1V192h-2V191h-3V192h-1V191h-3V192h-1V190h-1V191h-1V190h-2V191h-67V192h-2V193h-1V191h-1V192h-2V195h-1V192h-2V193h-1V191h-1V193h-1V192h-1V195h-1V192h-1V194h-1V192h-1V191h-2V198h-1V191h-1V194h-1V198h-1V192h-2V195h-1V193h-1V202h-1V192h-1V195h-1V192h-3V193h-1V195h-1V194h-1V193h-1V192h-2V194h-1V192h-3V193h-1V192h-1V196h-1V192h-2V193h-1V192h-1V194h-1V193h-1V192h-1V195h-1V192h-2V191h-1V193h-1V192h-1V191h-2V192h-1V198h-1V191h-1V192h-2V191h-5z" fill="#000000" shape-rendering="crispEdges"/><path d="M50 206h1V205h2V206h1V205h3V206h1V207h1V206h6V205h2V206h2V205h1V206h8V205h3V206h7V205h2V206h3V205h1V206h1V205h1V206h4V205h3V206h2V207h1V206h4V205h1V206h4V205h4V206h3V205h2V206h2V205h4V206h2V205h1V206h7V205h5V206h6V205h2V206h6V205h1V206h4V205h1V206h2V205h2V206h3V205h1V206h17V205h1V206h3V205h1V206h1V207h1V206h3V204h2V205h4V206h1V204h1V205h1V206h1V205h1V206h1V205h1V204h3V203h1V202h1V206h1V204h2V205h3V204h2V205h1V204h2V205h1V206h1V204h1V205h1V206h1V205h1V206h1V205h1V206h8V205h1V206h9V205h1V206h5V205h1V206h3V205h1V206h3V205h1V206h10V205h1V206h1V205h1V206h1V205h1V206h1V205h1V206h1V205h1V206h1V205h1V206h2V205h2V206h7V207h1V206h6V205h2V206h3V205h1V206h3V205h1V206h4V205h1V206h2V205h2V206h6V205h1V206h1V205h2V206h13V207h1V206h1V205h1V206h20V205h2V206h1V205h1V206h2V205h1V206h1V205h1V206h4V205h1V206h17V205h1V207h1V206h1V205h2V204h1V205h1V204h2V206h1V204h2V206h1V205h2V204h1V206h1V205h1V200h1V204h2V205h2V206h2V205h1V206h9V205h2V206h3V207h1V206h26V205h1V206h10V207h1V206h4V205h2V206h6V205h1V206h3V207h1V206h13V205h2V206h5V207h1V206h1V205h1V206h15V205h1V206h34V205h1V206h3V205h1V206h25V205h1V206h9V207h2V206h16V205h1V206h22V207h1V206h2V207h1V206h6V205h1V206h5V207h1V206h1V205h1V206h2V207h1V206h2V205h1V206h5V205h1V206h2V207h1V206h13V207h1V206h10V207h1V206h9V207h1V206h4V205h1V206h5V207h1V206h4V205h1V206h12V207h2V206h15V207h2V206h5V207h1V206h12V207h1V206h1V205h1V206h4V205h1V206h9V207h1V206h13V205h1V206h6V205h1V206h6V205h1V206h8V207h3V206h1V207h1V206h7V207h1V206h6V207h1V206h1V205h1V206h5V205h1V204h3V206h1V205h1V206h1V205h1V204h1V205h1V206h1V203h1V204h1V206h2V204h1V206h2V205h2V206h1V205h1V206h1V204h2V205h2V206h1V205h1V206h9V207h1V206h2V205h1V206h2V205h1V206h7V205h1V206h3V207h2V206h3V205h3V206h3V207h3V206h1V207h2V206h4V207h1V206h4V207h1V206h1V207h2V206h14V205h1V206h5V207h4V206h5V207h1V206h5V207h2V206h10V207h1V206h4V205h1V206h2V205h1V206h3V205h1V206h1V205h1V206h1V205h4V206h14V207h1V206h22V205h1V206h5V205h1V206h15V207h1V206h6V207h1V206h6V205h1V206h2V207h3V206h5V207h1V206h3V205h1V207h1V206h3V207h1V206h3V207h2V206h7V205h1V207h-1V208h-4V209h-1V208h-1V209h-3V208h-2V209h-2V208h-1V209h-3V208h-3V209h-2V208h-3V209h-1V208h-1V209h-3V208h-8V209h-2V208h-6V209h-1V208h-1V209h-1V208h-26V209h-3V208h-1V209h-1V208h-1V209h-1V208h-3V209h-2V208h-4V209h-1V208h-5V209h-1V208h-8V207h-1V208h-1V207h-1V208h-5V209h-1V208h-10V209h-1V208h-9V209h-3V208h-3V209h-1V208h-1V209h-1V208h-4V209h-5V208h-7V209h-1V208h-3V209h-2V208h-7V209h-2V208h-1V209h-2V208h-2V209h-4V208h-1V209h-3V210h-2V209h-3V208h-2V207h-1V208h-3V209h-1V208h-1V209h-2V208h-11V207h-1V208h-5V209h-1V208h-4V209h-1V208h-4V209h-7V210h-1V209h-2V208h-1V209h-2V211h-1V212h-1V209h-1V210h-3V209h-1V210h-1V209h-3V208h-1V210h-2V209h-1V210h-1V208h-7V209h-1V208h-6V209h-1V208h-1V209h-2V208h-1V209h-1V208h-2V209h-5V208h-15V207h-1V208h-6V207h-1V208h-5V209h-1V208h-2V209h-1V208h-3V209h-2V208h-1V209h-2V208h-4V209h-1V208h-8V209h-1V208h-1V209h-1V208h-3V209h-1V208h-5V209h-2V208h-4V209h-3V208h-9V209h-1V208h-4V209h-3V208h-14V209h-1V208h-2V209h-1V208h-7V209h-2V208h-1V209h-1V208h-9V209h-1V208h-6V209h-2V208h-1V209h-5V208h-7V209h-1V208h-2V209h-2V208h-4V209h-1V208h-1V209h-1V208h-1V209h-1V208h-1V209h-1V208h-4V209h-3V208h-1V209h-1V208h-8V209h-1V208h-2V209h-1V208h-2V209h-2V208h-5V209h-6V208h-6V209h-1V208h-8V209h-1V208h-4V209h-1V208h-1V209h-5V208h-3V209h-1V208h-9V209h-2V208h-5V209h-1V208h-4V209h-1V208h-16V209h-1V208h-3V209h-1V208h-3V209h-1V208h-12V209h-1V208h-2V209h-1V208h-6V207h-1V208h-17V209h-1V208h-6V207h-1V208h-11V209h-1V208h-1V209h-1V208h-10V207h-2V208h-3V209h-2V208h-10V207h-1V208h-1V209h-2V208h-18V209h-1V208h-3V209h-3V208h-12V209h-2V208h-1V210h-1V208h-1V209h-1V208h-1V212h-1V209h-5V208h-1V209h-1V210h-1V208h-1V210h-1V209h-8V208h-11V209h-3V208h-1V209h-1V208h-9V207h-1V209h-2V208h-3V207h-1V208h-1V209h-1V208h-4V209h-1V208h-2V209h-1V208h-12V209h-2V208h-5V209h-1V208h-4V209h-1V208h-11V207h-2V208h-3V209h-1V208h-9V209h-1V208h-8V209h-3V208h-10V207h-1V208h-11V209h-1V208h-12V207h-1V208h-3V207h-1V208h-5V207h-1V208h-10V209h-1V208h-12V209h-1V208h-1V212h-1V208h-4V210h-1V209h-1V210h-1V208h-1V210h-1V211h-1V209h-3V210h-1V209h-1V208h-1V209h-1V210h-1V208h-1V209h-1V208h-3V209h-1V208h-6V209h-1V208h-1V209h-1V208h-1V207h-1V208h-19V209h-1V208h-5V207h-1V208h-1V209h-1V208h-6V207h-1V209h-1V208h-5V207h-2V208h-7V207h-2V208h-9V207h-1V208h-3V207h-2V208h-3V207h-2V208h-11V207h-1V208h-4V209h-2V208h-1V207h-3V208h-33V207h-1V208h-5V209h-1V208h-1V209h-1V208h-1V207h-2V208h-2V207h-1V208h-2z" fill="#ff0000" shape-rendering="crispEdges"/><path d="M50 223h2V222h1V223h8V222h7V221h1V222h2V223h1V222h1V223h2V222h1V223h2V222h1V223h1V222h1V223h1V222h2V223h1V222h1V223h1V222h1V223h1V222h2V223h1V222h2V223h5V222h4V223h4V222h1V223h2V222h4V223h3V222h2V223h2V222h1V223h1V222h3V223h3V222h1V223h1V222h3V223h2V222h5V223h1V222h2V223h2V222h1V223h2V222h2V223h1V222h3V221h1V222h4V223h3V222h1V223h6V222h4V223h2V222h2V223h5V222h2V223h1V222h1V223h2V222h3V223h1V222h1V223h1V222h1V223h1V222h2V223h4V222h4V223h7V222h1V223h1V222h6V223h1V222h1V223h6V222h2V223h4V222h4V223h4V222h4V223h1V222h2V223h2V222h6V223h3V222h4V223h1V222h2V223h1V222h1V223h1V222h1V223h2V222h5V223h1V222h10V223h3V222h6V223h1V222h22V223h4V222h5V223h1V222h2V223h1V222h3V223h1V222h1V223h1V222h1V223h1V222h1V223h1V222h1V223h1V222h2V221h1V222h2V223h1V222h2V223h1V222h7V223h2V222h3V223h3V222h1V223h4V222h2V223h1V222h8V223h1V222h4V223h3V222h5V223h2V222h1V223h1V222h3V223h1V222h1V223h1V222h16V221h1V222h2V223h2V222h2V223h1V222h2V223h1V222h6V221h1V222h5V223h2V222h8V223h2V222h2V223h1V222h18V223h1V222h1V223h2V222h3V223h2V222h1V223h1V222h4V223h1V222h14V223h1V222h1V223h1V222h7V223h1V222h1V223h1V222h2V223h6V222h6V223h1V222h4V223h1V222h12V221h1V222h4V223h2V222h4V223h1V222h2V221h1V222h3V223h2V222h6V223h1V222h2V223h5V222h3V223h2V222h6V223h1V222h2V223h1V222h6V223h1V222h3V223h1V222h10V223h5V222h1V223h2V222h9V223h1V222h1V223h1V222h1V221h1V223h1V222h8V221h1V222h2V221h2V222h10V221h1V222h8V221h1V222h8V221h1V222h3V221h1V222h5V223h1V222h6V221h2V222h2V221h1V222h9V221h1V222h4V221h2V222h2V221h1V222h58V221h1V222h2V221h1V222h1V223h2V222h6V221h1V222h4V223h1V222h3V221h1V222h8V221h1V222h4V221h2V222h1V221h1V222h6V221h1V222h1V221h1V222h2V223h2V222h12V221h1V222h2V221h1V222h1V223h1V222h7V221h1V222h5V223h2V222h5V221h1V222h1V221h1V222h1V221h1V222h14V221h1V222h11V223h1V222h2V221h1V222h1V220h1V221h1V219h1V221h2V220h1V222h1V221h1V219h1V220h1V219h1V220h2V221h1V216h1V221h1V220h1V221h3V222h1V221h2V222h1V221h1V222h4V221h3V222h3V221h1V222h4V221h1V222h3V221h1V222h4V221h3V222h2V221h3V222h1V221h3V222h2V221h1V222h7V221h1V222h10V221h1V222h1V221h2V222h12V223h1V222h12V221h1V222h8V223h1V222h1V221h1V222h2V223h1V222h4V221h1V222h1V221h2V222h8V221h1V222h6V221h2V222h9V221h1V222h1V221h1V222h3V221h1V222h1V223h1V222h1V221h1V222h8V221h1V222h18V221h2V222h10V221h1V222h1V224h-13V223h-1V224h-7V225h-1V224h-1V225h-1V224h-10V225h-3V224h-6V225h-1V224h-7V223h-1V224h-10V223h-1V224h-12V225h-1V224h-10V225h-1V224h-4V225h-1V224h-1V225h-1V224h-1V225h-1V224h-17V225h-1V224h-9V225h-1V224h-18V225h-2V224h-8V223h-2V224h-3V223h-1V224h-3V223h-2V224h-10V225h-1V224h-3V225h-1V224h-4V223h-1V224h-6V228h-1V224h-3V227h-1V225h-1V226h-1V230h-1V225h-2V226h-1V227h-1V228h-1V226h-3V232h-1V225h-1V226h-3V224h-1V225h-1V224h-4V225h-3V224h-34V225h-2V224h-3V225h-1V224h-5V225h-2V224h-2V225h-1V224h-17V225h-3V224h-7V225h-1V224h-1V225h-1V224h-17V223h-1V224h-3V225h-1V224h-1V225h-1V224h-1V225h-1V224h-3V225h-2V224h-2V225h-2V224h-1V223h-1V224h-40V225h-1V224h-3V225h-3V224h-2V225h-2V224h-9V225h-1V223h-1V224h-3V223h-1V224h-14V223h-1V225h-1V224h-1V223h-2V224h-6V225h-2V224h-11V225h-2V224h-1V225h-1V224h-29V225h-1V224h-5V225h-1V224h-2V225h-3V224h-1V225h-1V224h-1V225h-1V224h-4V225h-9V224h-4V225h-1V224h-2V225h-4V224h-2V225h-3V224h-5V225h-1V224h-2V225h-2V224h-2V225h-1V224h-1V225h-5V224h-1V225h-5V224h-2V225h-2V224h-1V225h-1V224h-3V225h-2V224h-6V225h-3V224h-1V225h-3V224h-2V225h-2V224h-1V225h-2V224h-4V225h-1V224h-4V225h-2V224h-4V225h-1V224h-2V225h-1V224h-2V225h-5V226h-1V225h-1V224h-2V225h-1V224h-1V225h-1V224h-6V225h-4V224h-14V225h-1V224h-4V225h-5V224h-2V225h-4V224h-4V225h-1V224h-4V225h-1V224h-2V225h-2V224h-2V225h-8V224h-1V225h-1V224h-1V225h-1V224h-3V225h-2V224h-8V225h-1V224h-1V225h-3V224h-1V225h-6V224h-4V225h-1V224h-2V225h-2V224h-1V225h-3V224h-2V225h-2V224h-1V225h-6V224h-1V225h-1V224h-1V225h-2V224h-1V225h-1V224h-1V225h-5V224h-3V225h-2V224h-5V225h-1V224h-1V225h-13V224h-2V225h-2V224h-1V225h-1V224h-4V225h-2V224h-2V225h-1V224h-4V225h-2V224h-1V225h-3V224h-1V225h-4V224h-2V225h-1V224h-2V225h-1V224h-4V225h-5V224h-12V225h-1V224h-1V225h-1V224h-1V225h-2V224h-2V225h-1V224h-1V225h-1V224h-6V225h-4V224h-4V225h-1V224h-4V225h-1V224h-5V225h-2V224h-1V225h-1V224h-1V225h-1V224h-1V225h-2V224h-4V225h-4V224h-1V225h-1V224h-2V225h-3V224h-2V225h-2V224h-3V225h-5V224h-2V225h-5V224h-1V225h-7V224h-1V225h-1V224h-6V225h-9V224h-3V225h-5V224h-1V225h-2V224h-1V225h-1V224h-1V225h-6V224h-1V225h-2V224h-1V225h-6V224h-1V225h-2V224h-4V225h-6V224h-1V225h-5V224h-6V225h-1V224h-1V225h-6V224h-1V225h-2V224h-1V225h-1V224h-2V225h-4V224h-2V225h-5V224h-1V225h-1V224h-1V225h-4V224h-1V225h-4V224h-2V225h-1V224h-1V225h-7V224h-3V225h-3V226h-1V225h-13V224h-1V225h-3V224h-1V225h-7V224h-1V225h-1V224h-1V225h-2V224h-1V225h-1V224h-3V225h-4V226h-1V225h-3V224h-1V225h-2z" fill="#0000ff" shape-rendering="crispEdges"/><path d="M50 239h1V238h1V239h3V238h1V239h1V238h1V239h5V238h1V239h3V238h1V239h6V238h1V239h2V238h1V239h1V238h2V239h2V238h1V239h3V238h1V239h1V238h1V239h1V238h4V239h1V240h1V239h4V238h1V239h8V238h2V239h2V238h1V239h3V238h2V239h6V238h1V239h4V238h1V239h5V238h1V239h3V238h2V239h2V238h1V239h4V238h5V239h3V238h9V239h2V238h1V239h2V238h1V239h4V238h1V239h10V238h1V239h2V238h2V239h3V238h1V239h1V238h2V239h2V240h1V239h3V238h2V239h1V238h1V239h1V238h5V239h6V238h6V239h1V238h6V239h3V238h1V239h1V238h1V239h1V238h2V239h6V238h5V239h2V238h1V239h1V238h1V239h1V238h1V239h1V238h5V239h1V238h1V239h2V238h1V239h5V238h4V239h1V238h1V237h1V238h8V239h1V238h1V239h1V238h1V239h2V238h5V239h2V238h2V239h3V238h1V239h1V238h1V239h2V238h6V239h4V238h2V239h10V238h9V239h1V238h1V239h4V238h4V237h1V238h1V239h1V238h3V239h5V238h4V239h1V238h1V239h2V238h1V239h1V238h5V239h2V238h3V239h7V238h2V239h1V238h3V239h2V238h8V239h1V238h6V237h1V238h1V239h1V238h1V239h1V238h1V239h4V238h5V239h3V238h6V239h1V238h2V239h3V238h3V237h1V238h9V239h1V238h22V239h1V238h2V239h1V238h1V239h1V238h1V237h1V238h1V237h1V238h1V239h1V238h3V239h2V238h7V237h1V238h7V239h2V238h2V239h1V238h6V239h4V238h2V239h2V238h2V237h1V238h2V239h1V238h3V237h1V238h9V239h1V238h1V239h1V238h3V239h1V238h6V239h1V238h1V237h2V238h9V239h3V238h29V239h1V238h1V239h1V238h1V237h1V238h3V239h3V238h3V239h3V238h10V239h2V238h1V239h3V238h3V239h2V238h8V239h1V238h3V237h1V238h4V239h1V238h7V237h1V238h6V239h1V238h2V237h2V238h2V237h2V238h6V237h1V238h2V239h1V237h1V238h2V237h1V236h1V237h1V238h1V236h1V237h1V235h1V238h1V237h1V236h1V237h4V238h29V239h4V238h7V239h1V238h2V237h2V238h4V239h4V238h5V239h1V238h8V237h2V238h25V237h1V238h2V239h2V238h4V239h1V238h17V239h1V238h12V237h1V238h2V237h1V238h1V237h1V238h7V239h2V238h7V237h1V238h6V237h2V238h19V237h2V238h4V237h1V238h4V237h1V238h1V237h1V238h1V237h1V238h19V237h1V236h1V238h1V237h1V238h14V237h1V238h7V237h1V238h6V237h4V238h2V239h1V238h1V237h3V238h3V237h1V238h8V237h1V238h2V237h1V238h15V237h1V238h2V237h3V238h1V237h3V238h14V237h1V238h1V237h2V238h6V237h4V238h6V237h4V238h24V237h1V238h3V239h1V238h6V237h1V238h3V237h3V238h8V237h1V238h6V237h3V238h10V240h-12V239h-1V240h-15V239h-3V240h-5V241h-1V240h-1V241h-1V240h-2V241h-1V240h-16V241h-1V240h-12V239h-1V240h-1V239h-1V240h-5V241h-1V240h-1V239h-3V240h-3V241h-1V240h-2V239h-1V240h-5V241h-1V240h-1V241h-1V240h-3V241h-2V240h-24V241h-1V240h-2V241h-1V240h-11V241h-1V240h-8V241h-2V240h-10V241h-1V240h-1V239h-1V240h-2V241h-2V240h-8V241h-1V240h-2V241h-1V240h-8V239h-1V240h-6V241h-2V240h-3V241h-1V240h-4V241h-1V240h-3V239h-1V240h-5V241h-1V240h-15V241h-2V240h-1V241h-2V240h-9V239h-1V240h-9V241h-1V240h-2V241h-1V240h-1V241h-3V240h-1V241h-2V240h-15V241h-1V240h-5V241h-1V240h-10V241h-1V240h-3V241h-1V240h-1V241h-2V240h-3V241h-4V240h-13V241h-1V240h-6V241h-1V240h-1V241h-1V240h-13V241h-2V240h-3V241h-1V240h-1V241h-5V240h-1V241h-1V240h-5V241h-2V240h-1V241h-1V240h-4V241h-4V240h-2V241h-1V240h-3V241h-2V240h-7V241h-1V240h-3V241h-1V240h-7V241h-3V240h-1V242h-3V240h-1V241h-4V243h-1V241h-4V240h-1V241h-2V240h-15V241h-4V240h-12V241h-3V240h-7V241h-2V240h-1V241h-2V240h-1V241h-1V240h-2V241h-2V240h-3V241h-6V240h-1V241h-1V240h-8V241h-3V240h-3V241h-5V240h-3V241h-3V240h-9V241h-1V240h-11V241h-1V240h-3V241h-1V240h-2V241h-4V240h-9V239h-1V240h-2V241h-1V240h-1V241h-2V240h-3V241h-1V240h-3V241h-1V240h-1V241h-1V240h-3V241h-1V240h-7V241h-1V240h-1V241h-2V240h-4V241h-2V240h-2V241h-5V240h-4V241h-2V240h-1V241h-3V240h-6V241h-1V240h-2V241h-1V240h-5V241h-2V240h-3V241h-1V240h-5V241h-4V240h-1V241h-1V240h-11V241h-1V240h-2V241h-2V240h-6V241h-1V240h-13V241h-3V240h-2V241h-1V240h-6V241h-2V242h-1V241h-1V240h-1V241h-1V240h-1V241h-7V240h-1V241h-1V240h-4V241h-1V240h-2V241h-2V240h-1V241h-1V240h-3V241h-1V240h-2V241h-3V240h-2V241h-1V240h-1V241h-10V240h-1V241h-2V240h-1V241h-1V240h-3V241h-6V240h-3V241h-5V242h-1V240h-1V241h-1V240h-1V241h-1V240h-6V241h-4V240h-1V241h-1V240h-4V241h-1V240h-4V241h-3V242h-3V241h-4V240h-2V241h-4V240h-4V241h-10V240h-2V241h-2V240h-3V241h-4V240h-1V241h-3V240h-2V241h-3V240h-5V241h-1V240h-1V241h-1V240h-1V241h-6V240h-1V241h-4V240h-5V241h-5V240h-1V241h-2V240h-4V241h-7V240h-2V241h-3V240h-1V241h-3V240h-1V241h-3V240h-2V241h-2V240h-1V241h-1V240h-2V241h-3V242h-1V241h-3V240h-1V241h-7V240h-1V241h-2V242h-1V241h-1V242h-2V241h-1V240h-1V241h-2V240h-1V241h-3V240h-1V241h-19V240h-1V241h-7V240h-1V241h-1V240h-3V241h-1V240h-1V241h-3V240h-1V241h-1V240h-1V241h-6V240h-1V241h-1V242h-1V240h-1V241h-4V240h-1V241h-22V240h-1V241h-17V242h-1V241h-4V240h-1V241h-1V240h-1V241h-8V240h-2V241h-1V240h-1V241h-2V240h-1V241h-3V242h-1V241h-12V240h-1V241h-1V240h-1V241h-5z" fill="#006400" shape-rendering="crispEdges"/><path d="M50 255h1V256h1V255h2V256h4V255h1V254h1V255h9V256h4V255h6V256h2V255h2V256h2V255h3V256h1V255h2V256h1V255h1V256h1V255h4V256h2V255h1V256h2V255h1V256h1V255h1V256h2V255h1V256h1V255h1V256h2V255h16V256h5V255h14V254h2V255h3V256h2V255h1V256h3V255h1V254h1V255h1V254h1V256h3V255h2V256h2V255h1V256h5V255h1V256h1V255h4V256h6V255h1V256h6V255h2V256h2V255h6V256h1V255h2V256h1V255h2V256h2V255h17V256h2V255h2V256h1V255h8V256h1V255h4V256h2V255h1V256h1V255h12V256h3V255h6V256h3V255h3V256h2V255h4V256h2V255h11V256h2V255h1V254h1V255h3V256h1V255h2V254h1V255h1V256h1V255h1V256h2V254h1V255h1V254h1V253h2V254h3V255h3V254h1V255h3V254h1V255h2V254h3V252h1V254h1V255h1V254h1V253h1V254h4V253h1V252h1V254h1V255h1V254h1V255h4V254h1V255h1V256h3V255h11V256h1V255h1V256h6V255h1V256h4V255h1V254h1V255h1V256h1V255h4V256h1V255h14V256h1V255h3V254h1V255h2V256h2V255h3V256h3V255h1V256h1V255h1V256h3V255h1V256h4V255h2V256h1V255h3V256h3V255h3V256h1V255h6V256h1V255h3V256h2V255h2V256h4V255h3V256h2V255h8V256h1V255h12V256h1V255h6V256h2V255h4V256h3V255h3V254h2V256h1V255h1V256h2V255h3V256h1V255h1V256h2V255h9V256h4V255h2V256h1V255h1V256h3V255h1V256h2V255h9V256h2V255h5V256h3V255h4V256h2V255h3V256h5V255h1V256h1V255h3V254h1V255h5V256h1V255h6V256h2V255h1V254h1V255h4V254h1V255h2V256h2V255h1V256h1V255h4V254h1V255h1V256h1V255h1V256h2V255h1V256h2V255h8V254h1V255h6V254h2V255h1V256h2V255h1V256h2V255h1V256h3V255h13V256h1V255h4V256h3V255h1V256h2V255h3V256h3V255h2V256h1V255h1V256h1V255h1V256h1V255h1V256h2V255h2V256h2V255h2V254h2V255h3V256h1V255h2V254h2V251h1V255h1V254h1V256h1V255h3V256h1V255h1V256h4V255h11V256h2V255h2V256h1V255h1V256h1V255h2V256h2V255h10V254h1V255h2V256h1V255h3V256h1V255h1V256h2V255h10V254h1V255h5V256h1V255h1V256h1V255h1V256h1V255h3V256h1V255h12V256h1V255h3V254h1V255h1V256h1V255h1V256h1V255h6V256h1V255h3V256h4V255h1V256h2V255h1V256h2V255h7V254h1V253h1V255h1V254h1V255h8V254h2V255h20V256h2V255h1V256h1V255h12V256h1V255h7V254h1V255h10V256h5V255h7V254h1V255h5V254h1V255h2V256h1V254h1V255h1V254h3V255h2V254h2V255h1V254h1V255h1V254h2V255h4V254h1V255h6V256h1V255h6V256h1V255h1V256h2V255h2V256h2V255h2V256h3V255h4V256h1V255h3V256h1V255h4V254h1V255h21V256h1V255h2V254h1V255h1V256h1V255h4V254h1V255h10V256h1V255h2V254h1V255h1V254h1V255h3V254h1V255h1V254h1V255h1V254h1V255h8V254h1V255h9V256h4V255h11V254h1V255h1V254h2V255h5V256h2V255h12V254h2V255h5V254h1V255h3V256h1V255h2V256h1V255h5V256h1V255h12V256h1V258h-2V257h-2V258h-3V257h-5V258h-2V257h-3V258h-3V257h-2V258h-1V257h-4V258h-2V257h-8V258h-2V257h-3V258h-1V257h-2V258h-4V257h-11V258h-1V257h-4V258h-1V257h-1V258h-5V257h-5V258h-1V257h-1V258h-1V257h-23V258h-1V257h-1V258h-2V257h-1V258h-1V257h-10V258h-1V257h-4V258h-4V257h-20V258h-1V257h-1V258h-4V257h-1V258h-1V257h-4V258h-1V259h-1V258h-1V257h-1V258h-3V257h-1V258h-3V257h-1V258h-1V257h-5V258h-2V257h-2V258h-2V257h-3V258h-1V257h-1V258h-2V257h-1V259h-1V258h-1V259h-1V260h-1V259h-1V258h-5V257h-1V258h-1V257h-1V258h-2V257h-2V258h-2V257h-8V258h-1V257h-1V258h-6V257h-3V258h-1V257h-4V258h-1V257h-3V258h-1V257h-5V258h-2V257h-3V258h-3V257h-2V258h-1V257h-2V258h-1V257h-1V258h-2V257h-6V258h-1V257h-3V258h-2V257h-3V258h-2V257h-2V258h-1V257h-4V258h-1V257h-1V258h-2V257h-2V259h-3V258h-1V259h-1V257h-1V258h-1V257h-2V258h-1V257h-1V258h-5V257h-1V258h-8V257h-6V258h-3V257h-5V258h-3V257h-9V258h-2V257h-3V258h-5V257h-4V258h-1V257h-5V258h-1V257h-5V258h-4V257h-3V258h-3V257h-5V258h-1V257h-4V258h-3V257h-1V258h-4V257h-2V258h-2V257h-10V258h-5V257h-1V258h-1V257h-1V258h-1V257h-1V258h-1V259h-1V261h-1V259h-1V258h-1V257h-1V258h-1V257h-1V258h-2V257h-2V256h-1V257h-3V258h-2V257h-2V258h-2V257h-1V258h-6V257h-1V258h-3V257h-1V258h-4V257h-1V258h-4V257h-3V258h-2V257h-1V258h-1V257h-2V258h-1V257h-7V258h-6V257h-1V258h-2V257h-2V256h-1V257h-2V258h-1V257h-10V258h-1V257h-1V258h-7V257h-2V258h-1V257h-1V258h-1V257h-1V258h-4V257h-4V258h-1V257h-1V258h-1V257h-2V258h-2V257h-1V258h-1V257h-3V258h-2V257h-7V258h-1V257h-1V258h-8V257h-2V258h-3V257h-3V258h-3V257h-1V258h-1V257h-3V258h-3V257h-4V258h-10V257h-1V258h-7V257h-3V258h-2V257h-4V258h-2V257h-1V258h-8V257h-5V258h-3V257h-4V258h-4V257h-4V258h-4V257h-4V258h-1V257h-1V258h-5V257h-1V258h-1V257h-1V258h-2V257h-2V258h-3V257h-1V258h-6V257h-1V258h-3V257h-1V258h-2V257h-1V258h-2V257h-3V258h-1V257h-3V258h-3V257h-2V258h-2V257h-2V258h-8V257h-1V258h-1V257h-1V258h-4V257h-2V258h-4V257h-1V258h-1V257h-2V258h-1V257h-3V258h-3V257h-6V258h-4V257h-1V258h-1V257h-1V258h-2V257h-1V258h-5V257h-1V258h-9V257h-5V258h-1V257h-4V258h-3V257h-2V258h-3V259h-1V258h-2V260h-1V258h-2V261h-1V258h-1V259h-2V257h-1V260h-1V258h-2V257h-1V260h-1V258h-1V260h-1V258h-2V259h-1V258h-5V257h-1V258h-2V257h-1V258h-1V257h-1V258h-3V259h-1V258h-2V257h-1V258h-1V257h-1V258h-1V257h-2V258h-2V257h-3V258h-5V257h-2V258h-1V257h-4V258h-1V257h-1V258h-5V257h-1V258h-3V257h-1V258h-4V257h-1V258h-1V257h-1V258h-3V259h-1V258h-3V257h-2V258h-1V257h-2V258h-2V257h-4V258h-4V257h-1V258h-2V257h-1V258h-2V257h-4V258h-1V257h-1V258h-7V257h-2V258h-1V257h-3V258h-1V257h-3V258h-1V257h-4V258h-3V257h-2V258h-4V257h-5V258h-3V257h-2V259h-1V258h-5V257h-1V258h-7V257h-2V258h-2V257h-1V258h-8V257h-2V258h-3V257h-4V258h-3V257h-1V258h-2V257h-5V258h-2V257h-5V258h-2V257h-2V258h-1V257h-2V259h-1V258h-4V257h-2V258h-1V257h-3V258h-1V257h-4V258h-1V257h-2V258h-1V257h-1V258h-4V257h-1V258h-2V257h-1V258h-1V257h-1V258h-6V257h-3V258h-3V257h-2V258h-1V257h-1V258h-8V257h-2V258h-1V257h-2V258h-6V257h-6V258h-1V257h-2V258h-9z" fill="#000000" shape-rendering="crispEdges"/><path d="M50 272h3V271h1V270h1V271h1V272h2V271h1V272h6V271h2V272h1V271h1V272h9V273h1V272h1V271h1V272h2V271h3V272h8V271h1V272h2V271h5V272h8V271h1V272h10V271h1V272h5V271h1V272h10V271h1V272h11V271h2V272h5V273h1V272h6V271h1V272h3V271h5V272h3V271h3V272h3V271h1V272h7V271h1V272h1V271h1V272h2V271h2V272h7V271h1V272h7V271h4V272h1V271h1V272h5V271h1V272h1V271h1V272h7V271h1V272h2V271h1V272h1V271h1V272h1V271h1V272h2V271h2V272h2V271h2V272h4V271h1V272h3V271h1V272h4V271h1V272h2V271h1V272h6V271h1V272h4V271h5V272h1V271h2V272h4V271h3V272h4V271h2V272h3V271h3V272h2V271h1V272h2V271h1V272h2V271h1V272h2V271h2V272h1V271h2V272h3V271h2V272h1V271h1V272h16V271h2V272h1V271h3V272h1V271h5V272h5V271h4V272h3V270h1V271h3V272h1V271h1V272h1V271h1V272h14V271h1V272h5V271h2V272h1V271h4V272h6V270h1V272h4V271h3V272h2V269h1V271h1V270h2V271h2V270h1V272h1V271h2V266h1V271h2V270h1V272h2V271h4V272h5V271h1V272h10V271h1V272h1V271h1V272h1V271h1V272h1V271h13V272h1V271h1V272h1V273h1V272h2V271h1V272h2V271h3V272h1V271h2V272h2V271h2V272h1V271h4V272h6V271h2V272h1V271h7V272h2V271h2V272h3V271h4V272h1V271h1V272h1V271h1V272h6V271h1V272h1V271h2V272h1V271h2V272h1V271h4V272h1V270h1V271h3V272h1V271h5V272h1V271h1V272h1V271h1V272h1V271h1V272h1V271h2V272h1V271h1V272h1V271h1V270h2V268h1V270h1V271h1V270h3V268h1V270h1V271h1V270h1V271h1V272h2V271h2V272h6V271h7V272h1V271h2V272h1V271h4V272h2V271h3V270h1V271h7V272h1V271h4V272h1V271h1V272h5V271h1V272h2V271h1V272h1V271h2V272h1V271h1V272h2V271h2V270h1V271h7V272h1V271h5V272h1V271h1V272h4V271h2V272h1V271h1V272h3V271h2V272h2V271h2V272h2V271h4V272h2V271h1V272h1V271h4V272h3V271h1V272h3V271h5V272h2V271h1V272h1V271h7V272h3V271h1V270h1V272h7V271h5V272h5V271h2V270h1V271h16V272h2V271h1V272h1V271h1V272h2V271h4V272h1V271h3V270h1V271h8V272h1V271h1V272h1V271h2V272h2V271h4V272h1V271h2V272h4V271h4V272h1V271h10V270h3V271h1V270h2V271h1V270h1V269h1V270h2V271h1V269h1V270h2V268h1V264h1V269h2V271h1V270h1V271h1V272h1V271h1V272h2V271h3V272h3V271h1V272h1V271h5V272h4V271h3V272h1V271h1V272h1V271h10V272h1V271h2V272h1V271h4V270h1V271h1V272h1V271h1V272h1V271h3V272h1V271h3V272h7V271h2V272h1V271h8V272h5V271h3V272h2V271h1V272h1V271h2V272h2V271h3V272h1V271h4V272h1V271h5V272h1V271h1V272h1V271h7V272h1V271h3V270h1V271h2V272h1V271h1V272h1V271h12V272h5V271h5V272h1V271h6V272h1V271h6V272h2V271h3V272h1V271h4V270h1V271h7V272h8V271h11V272h2V271h1V272h1V271h6V272h1V271h11V272h1V271h5V272h1V271h4V272h2V271h19V272h3V271h19V272h6V271h3V272h2V271h2V272h2V271h2V272h1V271h2V274h-1V273h-1V274h-1V273h-2V274h-15V273h-8V274h-2V273h-8V274h-4V273h-12V274h-1V273h-5V274h-9V273h-4V274h-3V273h-1V274h-1V273h-5V274h-1V273h-1V274h-2V273h-2V274h-1V273h-2V274h-1V273h-1V274h-2V273h-1V274h-1V273h-1V274h-1V273h-1V274h-1V273h-5V274h-2V275h-1V274h-3V275h-1V274h-2V273h-4V274h-2V273h-4V274h-3V273h-1V274h-4V273h-4V274h-4V273h-4V274h-1V273h-3V274h-4V278h-1V274h-2V273h-1V274h-1V273h-9V274h-2V273h-1V274h-1V273h-1V274h-1V273h-1V274h-1V273h-2V274h-1V273h-1V274h-1V273h-1V274h-1V273h-1V274h-3V273h-1V274h-2V273h-3V274h-4V273h-2V274h-1V273h-3V274h-5V273h-1V274h-2V273h-2V274h-7V273h-7V274h-1V273h-1V274h-3V275h-1V274h-5V273h-2V274h-2V273h-2V274h-4V273h-5V274h-2V273h-1V274h-1V273h-1V274h-3V273h-2V274h-1V273h-3V274h-4V273h-1V274h-6V273h-4V274h-6V273h-1V274h-2V275h-1V274h-1V275h-1V274h-2V275h-1V274h-6V275h-1V276h-1V275h-1V274h-4V275h-1V274h-3V273h-1V274h-3V273h-6V274h-3V273h-2V274h-1V273h-1V274h-9V273h-1V274h-2V275h-1V273h-2V274h-3V273h-2V274h-1V273h-8V274h-2V273h-4V274h-7V273h-10V274h-1V273h-6V274h-1V273h-1V274h-5V273h-4V274h-8V273h-1V274h-5V273h-2V274h-2V273h-2V274h-4V273h-4V274h-2V275h-1V274h-3V275h-1V274h-3V273h-1V274h-8V273h-1V274h-3V273h-1V275h-1V274h-9V273h-1V274h-4V273h-1V274h-2V273h-2V274h-1V273h-1V274h-1V273h-5V274h-1V273h-2V274h-1V273h-1V274h-2V273h-1V274h-2V273h-1V274h-4V273h-1V274h-7V273h-1V274h-4V273h-1V274h-3V273h-1V274h-1V273h-5V274h-3V273h-2V274h-2V273h-1V274h-2V273h-7V274h-4V275h-6V274h-2V275h-1V274h-2V275h-3V276h-1V275h-1V273h-1V274h-3V275h-1V274h-3V273h-1V274h-7V273h-4V274h-2V273h-1V274h-1V273h-2V274h-1V273h-1V274h-5V273h-1V274h-2V273h-1V274h-1V273h-1V274h-6V273h-1V274h-10V273h-1V274h-4V273h-4V274h-1V273h-1V274h-1V273h-2V274h-4V275h-1V274h-1V273h-1V274h-1V273h-1V274h-2V273h-1V274h-4V273h-1V274h-7V275h-3V274h-1V273h-1V274h-1V273h-9V274h-1V273h-1V274h-13V275h-1V274h-1V275h-1V274h-8V275h-1V274h-1V275h-4V274h-4V275h-2V274h-3V275h-1V274h-1V275h-1V274h-1V277h-1V275h-2V274h-2V275h-1V274h-4V273h-1V274h-1V275h-1V274h-5V273h-1V274h-4V273h-1V274h-12V275h-1V274h-12V273h-3V274h-3V273h-3V274h-3V275h-3V273h-4V274h-2V273h-2V274h-13V275h-1V274h-2V275h-1V274h-3V273h-1V274h-1V273h-1V274h-4V273h-2V274h-14V273h-3V274h-1V275h-1V274h-1V273h-1V274h-6V273h-2V274h-5V273h-1V274h-1V273h-2V274h-1V273h-1V274h-5V273h-1V274h-3V275h-1V274h-5V273h-1V274h-4V273h-1V274h-3V273h-1V274h-5V273h-1V274h-3V273h-1V274h-4V273h-1V274h-1V273h-1V274h-2V275h-1V274h-17V273h-2V274h-1V273h-1V274h-16V273h-1V274h-4V273h-1V274h-10V275h-1V274h-1V273h-2V274h-3V273h-1V274h-1V273h-2V274h-4V273h-1V274h-6V275h-1V274h-5V273h-1V274h-17V275h-1V274h-4V275h-1V274h-11V275h-1V274h-14V273h-3V274h-1V273h-1V274h-16V273h-1V274h-1V275h-1V274h-1V275h-1V274h-4V275h-1V274h-8V275h-1V274h-7V273h-1V274h-4z" fill="#ff0000" shape-rendering="crispEdges"/><path d="M50 289h1V288h1V289h3V288h1V289h2V288h1V287h1V286h1V287h1V288h3V285h1V288h1V286h1V287h1V288h5V289h1V288h2V289h3V288h4V289h2V288h2V289h1V288h9V289h3V288h2V289h4V288h4V289h1V288h1V289h1V288h2V289h2V288h4V289h3V288h1V289h3V288h3V287h1V288h1V289h2V288h2V289h1V288h1V289h1V288h10V289h1V288h17V289h4V288h3V289h3V288h1V289h1V288h1V289h1V288h2V289h3V287h1V288h8V287h1V288h8V289h2V288h2V289h4V288h1V289h2V288h2V289h3V288h2V289h1V288h4V289h4V288h1V289h1V288h2V289h1V288h2V289h2V288h1V289h1V288h5V289h1V288h1V289h2V288h6V289h1V288h2V289h1V288h2V289h1V288h6V289h2V288h2V289h2V288h1V289h2V288h1V289h4V288h11V287h1V288h1V287h1V288h6V289h4V288h9V289h2V288h1V287h1V289h3V288h4V289h4V288h2V286h1V288h1V286h1V287h1V288h2V289h1V288h6V289h1V288h22V289h1V288h10V287h1V288h4V287h2V288h8V289h1V288h7V289h2V288h2V287h3V288h1V287h1V288h7V289h1V288h3V289h1V288h1V289h2V288h4V289h1V288h1V289h1V287h1V288h5V287h1V288h1V289h1V288h3V289h2V288h6V287h2V288h7V287h1V288h2V287h1V289h1V288h1V289h1V288h1V287h1V289h1V288h1V289h1V288h5V289h2V288h20V289h3V288h10V287h1V288h12V287h1V288h9V289h1V288h1V285h1V287h1V289h1V288h5V289h6V288h10V289h2V288h8V289h1V288h9V289h1V288h17V287h2V288h6V289h1V288h2V289h2V288h4V287h1V288h1V287h1V288h1V289h2V288h4V289h2V288h1V287h1V288h1V287h2V288h3V287h1V288h1V287h1V288h5V289h1V288h3V287h2V288h2V287h1V288h1V289h1V288h1V289h4V288h1V289h4V288h3V287h1V288h3V287h2V288h1V287h1V288h19V287h1V289h3V288h3V289h1V288h8V289h1V288h1V289h1V288h9V287h1V289h3V288h6V287h2V288h4V287h1V288h10V289h1V288h3V289h1V288h1V287h1V288h5V287h1V288h6V289h2V288h6V289h1V288h1V289h1V288h1V289h2V288h6V287h2V288h12V289h1V288h8V287h3V288h3V289h1V288h11V287h2V288h4V287h2V288h1V287h2V288h9V287h1V288h14V289h2V288h6V287h1V288h13V287h3V288h1V287h2V288h2V287h1V288h6V287h1V288h9V289h1V288h7V289h2V288h7V287h4V288h1V287h2V288h7V287h2V288h3V287h3V288h1V287h2V288h2V287h2V286h1V287h1V288h3V287h4V288h8V287h1V288h3V287h1V288h1V287h2V288h1V287h2V288h1V287h1V288h4V287h1V288h13V287h2V288h4V289h1V288h1V289h1V288h8V287h1V288h25V287h4V288h5V287h1V288h7V287h1V288h3V287h1V288h2V287h1V288h4V289h1V288h6V289h2V288h1V289h1V288h13V287h2V288h5V287h2V288h5V287h2V288h4V287h1V288h1V290h-7V289h-1V290h-9V291h-1V290h-2V289h-1V290h-13V291h-2V290h-1V291h-2V290h-6V291h-1V290h-25V289h-2V290h-1V289h-1V290h-11V291h-1V290h-4V291h-1V290h-8V289h-1V290h-6V291h-1V290h-1V291h-1V290h-1V291h-1V290h-7V291h-1V290h-5V291h-1V290h-1V291h-1V290h-10V289h-1V290h-2V289h-1V290h-16V291h-1V289h-1V290h-5V289h-1V290h-4V289h-2V290h-7V289h-1V290h-8V289h-1V290h-2V289h-2V290h-1V289h-1V290h-6V291h-3V290h-2V291h-2V290h-3V291h-1V290h-4V291h-2V290h-2V291h-1V289h-1V290h-9V289h-2V290h-20V291h-1V290h-3V291h-5V290h-4V291h-1V290h-4V291h-1V290h-1V289h-1V290h-6V291h-2V290h-1V289h-2V290h-10V291h-1V290h-9V291h-2V290h-3V289h-1V290h-9V291h-2V290h-12V289h-1V290h-4V291h-1V290h-1V291h-7V290h-5V291h-2V290h-1V291h-3V290h-10V291h-1V290h-1V291h-3V290h-4V291h-1V290h-1V291h-1V290h-9V289h-1V290h-4V291h-6V290h-3V291h-1V290h-4V291h-2V290h-1V291h-3V290h-6V291h-2V290h-2V291h-3V290h-1V291h-2V290h-4V291h-4V290h-12V289h-1V290h-5V291h-13V290h-4V289h-1V290h-4V291h-1V290h-2V291h-2V290h-1V289h-1V290h-3V291h-1V290h-6V291h-2V290h-3V291h-3V290h-1V289h-1V290h-4V291h-4V290h-1V291h-1V292h-1V290h-10V291h-2V290h-8V291h-1V290h-4V291h-1V290h-1V291h-2V290h-1V291h-1V290h-2V291h-3V290h-3V291h-1V290h-1V291h-1V290h-1V291h-3V290h-3V291h-1V290h-2V291h-1V290h-3V291h-1V292h-1V291h-1V292h-1V291h-2V290h-2V291h-9V290h-1V291h-3V290h-10V291h-1V290h-1V291h-1V290h-2V291h-1V290h-1V291h-1V290h-7V291h-7V290h-9V291h-1V290h-3V291h-1V290h-1V291h-3V290h-1V291h-2V290h-1V291h-1V290h-2V291h-2V290h-1V291h-1V290h-2V291h-3V290h-4V291h-1V290h-5V291h-1V290h-2V291h-1V290h-1V291h-2V290h-2V291h-2V290h-3V291h-1V290h-8V291h-1V290h-1V291h-1V290h-4V291h-2V290h-1V291h-1V290h-2V291h-2V290h-1V291h-2V290h-1V291h-1V290h-2V291h-1V290h-2V289h-1V290h-3V291h-2V290h-6V291h-2V290h-2V291h-1V290h-2V291h-2V290h-6V291h-1V290h-1V291h-1V290h-4V291h-1V290h-4V291h-1V290h-6V291h-1V290h-1V291h-1V290h-2V291h-1V290h-10V291h-1V290h-2V291h-2V290h-2V291h-2V292h-1V291h-1V292h-3V291h-1V290h-1V291h-5V290h-3V291h-3V290h-1V291h-3V290h-3V291h-1V290h-4V291h-4V292h-1V290h-2V291h-1V290h-16V291h-8V290h-1V291h-2V290h-2V291h-2V290h-4V291h-1V290h-1V291h-5V290h-1V291h-3V290h-1V291h-2V290h-1V291h-2V290h-1V291h-1V290h-3V291h-9V290h-2V291h-7V290h-2V291h-2V290h-1V291h-5V290h-1V291h-11V290h-1V291h-1V290h-7V291h-1V290h-8V291h-4V290h-1V291h-8V290h-2V291h-6V290h-5V291h-1V290h-1V291h-1V290h-4V291h-1V290h-2V291h-2V290h-2V291h-1V290h-4V291h-1V290h-1V291h-7V290h-3V291h-10V290h-3V291h-5V290h-1V291h-2V290h-2V291h-10V290h-8V291h-2V290h-1V291h-3V290h-1V291h-1V290h-2V292h-1V291h-7V292h-1V291h-1V292h-2V291h-1V292h-2V297h-1V292h-1V291h-1V292h-3V291h-9z" fill="#0000ff" shape-rendering="crispEdges"/><path d="M50 305h11V304h3V305h7V304h2V305h2V304h2V305h4V304h1V305h3V304h1V305h2V304h4V305h2V304h1V305h14V304h1V305h9V306h1V305h2V304h2V305h2V304h2V305h6V306h1V305h1V304h1V305h1V306h1V305h6V304h1V305h4V304h1V305h1V304h1V305h2V304h1V305h2V304h1V305h1V304h1V305h4V304h1V305h3V304h1V305h7V304h1V305h1V304h1V305h1V304h1V305h1V304h1V301h1V304h2V305h1V303h2V305h1V304h2V305h1V304h2V303h1V305h2V304h4V305h2V303h1V305h1V304h3V305h1V304h2V305h3V304h1V305h4V306h1V305h5V304h3V305h12V304h1V305h2V304h1V305h9V304h2V305h1V304h1V305h2V306h1V305h3V304h2V305h6V304h1V305h1V304h2V305h2V304h1V305h2V304h3V305h2V306h1V305h13V304h2V305h10V304h1V305h11V304h2V305h9V304h1V305h1V304h1V305h8V306h1V305h3V304h2V305h13V306h1V305h3V304h1V305h3V304h1V305h2V304h2V305h1V304h3V305h1V304h1V306h1V305h6V306h2V305h3V304h1V305h16V304h1V305h2V304h1V305h2V304h1V305h22V304h1V305h2V304h2V305h2V304h1V305h10V306h1V305h5V304h1V305h9V304h1V305h4V304h1V305h7V304h1V305h19V304h1V305h14V306h1V305h1V306h2V305h4V304h1V305h2V304h1V305h16V306h1V305h2V304h1V305h17V306h2V305h6V304h1V305h8V304h1V305h19V304h2V305h3V304h2V305h6V306h1V305h8V304h1V305h6V306h1V305h1V306h1V305h1V304h1V305h2V304h1V305h3V304h1V305h2V304h1V305h7V304h1V305h3V304h1V305h2V306h1V304h2V305h7V306h2V305h2V304h1V305h2V304h1V305h5V304h1V305h16V304h1V305h11V306h1V305h7V304h1V305h7V304h2V305h12V304h1V305h3V304h1V305h8V306h2V305h5V304h1V305h2V306h1V305h4V304h1V305h6V306h3V305h2V304h1V305h2V304h1V305h2V306h1V305h4V304h1V305h3V306h2V305h14V304h1V305h4V304h2V305h2V303h1V305h1V304h2V303h1V304h2V305h1V304h1V305h1V303h1V305h4V304h3V305h4V306h1V305h6V304h1V305h4V304h1V305h9V306h2V305h2V306h3V305h3V304h1V303h1V305h1V303h1V304h2V303h1V302h1V304h1V303h1V301h1V304h1V303h1V304h1V305h9V304h1V305h2V304h1V305h9V304h1V305h2V304h1V305h26V304h1V305h2V304h1V305h4V304h1V305h3V304h1V305h7V304h1V305h3V306h1V305h3V306h2V305h3V306h2V305h5V306h1V305h20V304h1V305h5V306h1V305h20V304h2V305h5V304h1V305h3V304h5V305h4V304h1V303h1V305h8V306h1V305h13V306h1V305h10V304h1V305h1V304h1V305h19V306h1V305h13V308h-1V307h-4V308h-1V307h-7V308h-1V307h-10V308h-1V307h-21V308h-2V307h-3V308h-1V307h-8V308h-3V307h-1V308h-8V309h-1V308h-1V309h-2V308h-2V307h-2V308h-3V307h-1V308h-1V307h-1V308h-1V309h-2V308h-1V307h-1V308h-1V307h-17V308h-1V307h-1V308h-2V307h-6V308h-1V307h-10V308h-3V307h-2V308h-1V307h-2V308h-1V307h-5V308h-2V307h-3V308h-2V307h-1V308h-3V307h-1V308h-2V307h-12V306h-1V307h-14V308h-1V307h-4V308h-1V307h-6V308h-3V307h-17V308h-1V307h-3V306h-1V307h-5V308h-1V307h-5V310h-1V308h-1V309h-1V308h-2V307h-1V309h-2V308h-16V307h-16V308h-1V307h-2V308h-1V307h-5V310h-1V307h-1V308h-5V307h-1V308h-2V310h-1V309h-2V308h-1V309h-1V308h-1V310h-1V308h-1V309h-1V308h-1V307h-5V306h-1V307h-8V308h-1V307h-4V308h-3V307h-8V308h-2V307h-6V308h-4V307h-11V308h-3V307h-6V308h-2V307h-18V308h-1V307h-7V306h-1V307h-14V308h-2V307h-3V308h-3V307h-5V306h-1V307h-3V308h-1V307h-6V308h-1V307h-4V308h-1V307h-2V308h-1V307h-9V308h-2V307h-1V308h-1V307h-7V308h-1V307h-11V308h-1V307h-13V308h-2V307h-1V308h-2V307h-3V308h-1V307h-8V308h-1V307h-1V308h-1V307h-11V306h-1V307h-9V308h-1V307h-11V308h-1V307h-3V308h-1V307h-4V308h-1V307h-2V308h-1V307h-2V308h-3V307h-13V308h-1V307h-5V308h-1V307h-23V308h-5V307h-2V308h-1V307h-5V308h-1V307h-3V308h-1V307h-6V308h-1V307h-3V308h-1V307h-5V308h-1V307h-2V308h-1V307h-5V308h-1V307h-9V308h-1V307h-12V308h-1V307h-1V308h-1V307h-17V306h-1V307h-4V308h-1V307h-2V308h-1V307h-2V308h-2V307h-1V308h-1V307h-8V306h-1V307h-19V308h-1V307h-6V308h-2V307h-1V308h-1V307h-4V308h-1V307h-3V306h-1V307h-2V306h-1V307h-3V306h-1V307h-3V306h-1V307h-3V308h-2V307h-17V308h-2V307h-3V308h-1V307h-12V308h-1V307h-2V306h-2V307h-3V308h-3V307h-1V308h-1V307h-1V308h-1V307h-4V308h-2V307h-3V308h-1V307h-12V308h-1V307h-3V308h-2V307h-10V306h-2V307h-8V306h-1V307h-4V308h-1V307h-4V306h-2V307h-18V308h-1V307h-1V308h-1V307h-1V308h-2V307h-2V306h-2V307h-1V308h-1V307h-2V308h-2V307h-7V308h-1V307h-1V308h-3V307h-1V312h-1V308h-2V309h-2V308h-1V307h-2V308h-3V307h-1V308h-2V307h-2V309h-1V308h-1V307h-3V310h-1V307h-2V309h-2V308h-1V307h-1V308h-1V307h-3V308h-1V307h-2V308h-1V307h-2V306h-1V307h-4V308h-1V307h-13V306h-1V307h-11V308h-2V307h-2V308h-1V307h-6V306h-2V307h-6V308h-2V307h-23V306h-1V307h-2V306h-1V307h-1V306h-1V307h-3V306h-1V307h-3V306h-1V307h-9V306h-1V307h-12V308h-1V307h-1V308h-1V307h-3V308h-1V307h-2z" fill="#006400" shape-rendering="crispEdges"/><path d="M50 321h7V320h1V321h5V322h1V321h7V322h4V320h1V321h8V322h2V321h4V320h1V321h7V322h2V321h7V322h1V321h3V320h1V322h2V321h1V322h2V321h1V322h2V321h1V322h4V321h3V322h1V321h3V322h3V321h7V322h2V321h3V322h1V321h2V322h2V321h1V322h3V321h5V322h2V321h1V322h1V321h1V322h1V321h7V322h1V321h3V320h1V321h3V320h1V321h1V320h1V321h1V320h1V321h9V323h-13V322h-1V324h-1V323h-6V324h-1V323h-4V324h-1V323h-1V324h-4V323h-1V324h-2V323h-2V324h-1V323h-2V324h-6V323h-1V324h-2V323h-3V324h-3V323h-1V324h-1V323h-1V324h-1V323h-2V324h-8V323h-2V325h-1V324h-12V323h-4V324h-1V323h-3V324h-1V323h-1V324h-1V323h-1V324h-2V323h-3V324h-1V323h-8V324h-2V323h-1V324h-1V323h-2V324h-1V323h-4V324h-5V323h-4V324h-1V323h-1V324h-1V323h-7V324h-2V323h-2V324h-1V323h-1z" fill="#000000" shape-rendering="crispEdges"/><line x1="50.5" y1="50" x2="50.5" y2="842" stroke="#808080" stroke-width="1"/><line x1="122.5" y1="50" x2="122.5" y2="842" stroke="#808080" stroke-width="1"/><line x1="194.5" y1="50" x2="194.5" y2="842" stroke="#808080" stroke-width="1"/><line x1="266.5" y1="50" x2="266.5" y2="842" stroke="#808080" stroke-width="1"/><line x1="338.5" y1="50" x2="338.5" y2="842" stroke="#808080" stroke-width="1"/><line x1="410.5" y1="50" x2="410.5" y2="842" stroke="#808080" stroke-width="1"/><line x1="482.5" y1="50" x2="482.5" y2="842" stroke="#808080" stroke-width="1"/><line x1="554.5" y1="50" x2="554.5" y2="842" stroke="#808080" stroke-width="1"/><line x1="626.5" y1="50" x2="626.5" y2="842" stroke="#808080" stroke-width="1"/><line x1="698.5" y1="50" x2="698.5" y2="842" stroke="#808080" stroke-width="1"/><line x1="770.5" y1="50" x2="770.5" y2="842" stroke="#808080" stroke-width="1"/><line x1="842.5" y1="50" x2="842.5" y2="842" stroke="#808080" stroke-width="1"/><line x1="914.5" y1="50" x2="914.5" y2="842" stroke="#808080" stroke-width="1"/><line x1="986.5" y1="50" x2="986.5" y2="842" stroke="#808080" stroke-width="1"/><line x1="1058.5" y1="50" x2="1058.5" y2="842" stroke="#808080" stroke-width="1"/><line x1="1130.5" y1="50" x2="1130.5" y2="842" stroke="#808080" stroke-width="1"/><line x1="50" y1="50.5" x2="1131" y2="50.5" stroke="#000" stroke-width="1"/><line x1="50" y1="842.5" x2="1131" y2="842.5" stroke="#000" stroke-width="1"/><line x1="50.5" y1="842" x2="50.5" y2="854" stroke="#000" stroke-width="1"/><line x1="62.5" y1="842" x2="62.5" y2="850" stroke="#000" stroke-width="1"/><line x1="74.5" y1="842" x2="74.5" y2="850" stroke="#000" stroke-width="1"/><line x1="86.5" y1="842" x2="86.5" y2="850" stroke="#000" stroke-width="1"/><line x1="98.5" y1="842" x2="98.5" y2="850" stroke="#000" stroke-width="1"/><line x1="110.5" y1="842" x2="110.5" y2="850" stroke="#000" stroke-width="1"/><line x1="122.5" y1="842" x2="122.5" y2="854" stroke="#000" stroke-width="1"/><line x1="134.5" y1="842" x2="134.5" y2="850" stroke="#000" stroke-width="1"/><line x1="146.5" y1="842" x2="146.5" y2="850" stroke="#000" stroke-width="1"/><line x1="158.5" y1="842" x2="158.5" y2="850" stroke="#000" stroke-width="1"/><line x1="170.5" y1="842" x2="170.5" y2="850" stroke="#000" stroke-width="1"/><line x1="182.5" y1="842" x2="182.5" y2="850" stroke="#000" stroke-width="1"/><line x1="194.5" y1="842" x2="194.5" y2="854" stroke="#000" stroke-width="1"/><line x1="206.5" y1="842" x2="206.5" y2="850" stroke="#000" stroke-width="1"/><line x1="218.5" y1="842" x2="218.5" y2="850" stroke="#000" stroke-width="1"/><line x1="230.5" y1="842" x2="230.5" y2="850" stroke="#000" stroke-width="1"/><line x1="242.5" y1="842" x2="242.5" y2="850" stroke="#000" stroke-width="1"/><line x1="254.5" y1="842" x2="254.5" y2="850" stroke="#000" stroke-width="1"/><line x1="266.5" y1="842" x2="266.5" y2="854" stroke="#000" stroke-width="1"/><line x1="278.5" y1="842" x2="278.5" y2="850" stroke="#000" stroke-width="1"/><line x1="290.5" y1="842" x2="290.5" y2="850" stroke="#000" stroke-width="1"/><line x1="302.5" y1="842" x2="302.5" y2="850" stroke="#000" stroke-width="1"/><line x1="314.5" y1="842" x2="314.5" y2="850" stroke="#000" stroke-width="1"/><line x1="326.5" y1="842" x2="326.5" y2="850" stroke="#000" stroke-width="1"/><line x1="338.5" y1="842" x2="338.5" y2="854" stroke="#000" stroke-width="1"/><line x1="350.5" y1="842" x2="350.5" y2="850" stroke="#000" stroke-width="1"/><line x1="362.5" y1="842" x2="362.5" y2="850" stroke="#000" stroke-width="1"/><line x1="374.5" y1="842" x2="374.5" y2="850" stroke="#000" stroke-width="1"/><line x1="386.5" y1="842" x2="386.5" y2="850" stroke="#000" stroke-width="1"/><line x1="398.5" y1="842" x2="398.5" y2="850" stroke="#000" stroke-width="1"/><line x1="410.5" y1="842" x2="410.5" y2="854" stroke="#000" stroke-width="1"/><line x1="422.5" y1="842" x2="422.5" y2="850" stroke="#000" stroke-width="1"/><line x1="434.5" y1="842" x2="434.5" y2="850" stroke="#000" stroke-width="1"/><line x1="446.5" y1="842" x2="446.5" y2="850" stroke="#000" stroke-width="1"/><line x1="458.5" y1="842" x2="458.5" y2="850" stroke="#000" stroke-width="1"/><line x1="470.5" y1="842" x2="470.5" y2="850" stroke="#000" stroke-width="1"/><line x1="482.5" y1="842" x2="482.5" y2="854" stroke="#000" stroke-width="1"/><line x1="494.5" y1="842" x2="494.5" y2="850" stroke="#000" stroke-width="1"/><line x1="506.5" y1="842" x2="506.5" y2="850" stroke="#000" stroke-width="1"/><line x1="518.5" y1="842" x2="518.5" y2="850" stroke="#000" stroke-width="1"/><line x1="530.5" y1="842" x2="530.5" y2="850" stroke="#000" stroke-width="1"/><line x1="542.5" y1="842" x2="542.5" y2="850" stroke="#000" stroke-width="1"/><line x1="554.5" y1="842" x2="554.5" y2="854" stroke="#000" stroke-width="1"/><line x1="566.5" y1="842" x2="566.5" y2="850" stroke="#000" stroke-width="1"/><line x1="578.5" y1="842" x2="578.5" y2="850" stroke="#000" stroke-width="1"/><line x1="590.5" y1="842" x2="590.5" y2="850" stroke="#000" stroke-width="1"/><line x1="602.5" y1="842" x2="602.5" y2="850" stroke="#000" stroke-width="1"/><line x1="614.5" y1="842" x2="614.5" y2="850" stroke="#000" stroke-width="1"/><line x1="626.5" y1="842" x2="626.5" y2="854" stroke="#000" stroke-width="1"/><line x1="638.5" y1="842" x2="638.5" y2="850" stroke="#000" stroke-width="1"/><line x1="650.5" y1="842" x2="650.5" y2="850" stroke="#000" stroke-width="1"/><line x1="662.5" y1="842" x2="662.5" y2="850" stroke="#000" stroke-width="1"/><line x1="674.5" y1="842" x2="674.5" y2="850" stroke="#000" stroke-width="1"/><line x1="686.5" y1="842" x2="686.5" y2="850" stroke="#000" stroke-width="1"/><line x1="698.5" y1="842" x2="698.5" y2="854" stroke="#000" stroke-width="1"/><line x1="710.5" y1="842" x2="710.5" y2="850" stroke="#000" stroke-width="1"/><line x1="722.5" y1="842" x2="722.5" y2="850" stroke="#000" stroke-width="1"/><line x1="734.5" y1="842" x2="734.5" y2="850" stroke="#000" stroke-width="1"/><line x1="746.5" y1="842" x2="746.5" y2="850" stroke="#000" stroke-width="1"/><line x1="758.5" y1="842" x2="758.5" y2="850" stroke="#000" stroke-width="1"/><line x1="770.5" y1="842" x2="770.5" y2="854" stroke="#000" stroke-width="1"/><line x1="782.5" y1="842" x2="782.5" y2="850" stroke="#000" stroke-width="1"/><line x1="794.5" y1="842" x2="794.5" y2="850" stroke="#000" stroke-width="1"/><line x1="806.5" y1="842" x2="806.5" y2="850" stroke="#000" stroke-width="1"/><line x1="818.5" y1="842" x2="818.5" y2="850" stroke="#000" stroke-width="1"/><line x1="830.5" y1="842" x2="830.5" y2="850" stroke="#000" stroke-width="1"/><line x1="842.5" y1="842" x2="842.5" y2="854" stroke="#000" stroke-width="1"/><line x1="854.5" y1="842" x2="854.5" y2="850" stroke="#000" stroke-width="1"/><line x1="866.5" y1="842" x2="866.5" y2="850" stroke="#000" stroke-width="1"/><line x1="878.5" y1="842" x2="878.5" y2="850" stroke="#000" stroke-width="1"/><line x1="890.5" y1="842" x2="890.5" y2="850" stroke="#000" stroke-width="1"/><line x1="902.5" y1="842" x2="902.5" y2="850" stroke="#000" stroke-width="1"/><line x1="914.5" y1="842" x2="914.5" y2="854" stroke="#000" stroke-width="1"/><line x1="926.5" y1="842" x2="926.5" y2="850" stroke="#000" stroke-width="1"/><line x1="938.5" y1="842" x2="938.5" y2="850" stroke="#000" stroke-width="1"/><line x1="950.5" y1="842" x2="950.5" y2="850" stroke="#000" stroke-width="1"/><line x1="962.5" y1="842" x2="962.5" y2="850" stroke="#000" stroke-width="1"/><line x1="974.5" y1="842" x2="974.5" y2="850" stroke="#000" stroke-width="1"/><line x1="986.5" y1="842" x2="986.5" y2="854" stroke="#000" stroke-width="1"/><line x1="998.5" y1="842" x2="998.5" y2="850" stroke="#000" stroke-width="1"/><line x1="1010.5" y1="842" x2="1010.5" y2="850" stroke="#000" stroke-width="1"/><line x1="1022.5" y1="842" x2="1022.5" y2="850" stroke="#000" stroke-width="1"/><line x1="1034.5" y1="842" x2="1034.5" y2="850" stroke="#000" stroke-width="1"/><line x1="1046.5" y1="842" x2="1046.5" y2="850" stroke="#000" stroke-width="1"/><line x1="1058.5" y1="842" x2="1058.5" y2="854" stroke="#000" stroke-width="1"/><line x1="1070.5" y1="842" x2="1070.5" y2="850" stroke="#000" stroke-width="1"/><line x1="1082.5" y1="842" x2="1082.5" y2="850" stroke="#000" stroke-width="1"/><line x1="1094.5" y1="842" x2="1094.5" y2="850" stroke="#000" stroke-width="1"/><line x1="1106.5" y1="842" x2="1106.5" y2="850" stroke="#000" stroke-width="1"/><line x1="1118.5" y1="842" x2="1118.5" y2="850" stroke="#000" stroke-width="1"/><line x1="1130.5" y1="842" x2="1130.5" y2="854" stroke="#000" stroke-width="1"/><rect x="51" y="76" width="5" height="2" fill="#0000ff"/><rect x="51" y="112" width="3" height="2" fill="#000000"/><rect x="51" y="133" width="2" height="4" fill="#0000ff"/><rect x="51" y="161" width="4" height="2" fill="#000000"/><rect x="51" y="193" width="4" height="2" fill="#0000ff"/><rect x="51" y="256" width="3" height="2" fill="#0000ff"/><path d="M2 875h1v1h-1zM3 876h1v1h-1zM4 873h1v1h-1zM4 874h1v1h-1zM4 875h1v1h-1zM5 874h1v1h-1zM6 873h1v1h-1zM6 874h1v1h-1zM6 875h1v1h-1zM6 876h1v1h-1zM7 876h1v1h-1z" fill="#000" shape-rendering="crispEdges"/></svg>
<div class="mb" style="left:50px;top:7px">Feb 7,2026</div><div class="mb" style="left:50px;top:22px">DEC09 HHZ GS 01</div><div class="mb" style="left:50px;top:37px">(Decatur, IL)</div><div class="mb" style="left:0px;top:52px">CDT</div><div class="mb" style="left:1145px;top:52px">UTC</div><div class="sd" style="left:14px;top:121px"><span>0</span><span>1</span><span>:</span><span>0</span><span>0</span></div><div class="sd" style="left:1134px;top:121px"><span>0</span><span>5</span><span>:</span><span>1</span><span>5</span></div><div class="sd" style="left:14px;top:187px"><span>0</span><span>2</span><span>:</span><span>0</span><span>0</span></div><div class="sd" style="left:1134px;top:187px"><span>0</span><span>6</span><span>:</span><span>1</span><span>5</span></div><div class="sd" style="left:14px;top:253px"><span>0</span><span>3</span><span>:</span><span>0</span><span>0</span></div><div class="sd" style="left:1134px;top:253px"><span>0</span><span>7</span><span>:</span><span>1</span><span>5</span></div><div class="sd" style="left:14px;top:319px"><span>0</span><span>4</span><span>:</span><span>0</span><span>0</span></div><div class="sd" style="left:1134px;top:319px"><span>0</span><span>8</span><span>:</span><span>1</span><span>5</span></div><div class="sd" style="left:14px;top:385px"><span>0</span><span>5</span><span>:</span><span>0</span><span>0</span></div><div class="sd" style="left:1134px;top:385px"><span>0</span><span>9</span><span>:</span><span>1</span><span>5</span></div><div class="sd" style="left:14px;top:451px"><span>0</span><span>6</span><span>:</span><span>0</span><span>0</span></div><div class="sd" style="left:1134px;top:451px"><span>1</span><span>0</span><span>:</span><span>1</span><span>5</span></div><div class="sd" style="left:14px;top:517px"><span>0</span><span>7</span><span>:</span><span>0</span><span>0</span></div><div class="sd" style="left:1134px;top:517px"><span>1</span><span>1</span><span>:</span><span>1</span><span>5</span></div><div class="sd" style="left:14px;top:583px"><span>0</span><span>8</span><span>:</span><span>0</span><span>0</span></div><div class="sd" style="left:1134px;top:583px"><span>1</span><span>2</span><span>:</span><span>1</span><span>5</span></div><div class="sd" style="left:14px;top:649px"><span>0</span><span>9</span><span>:</span><span>0</span><span>0</span></div><div class="sd" style="left:1134px;top:649px"><span>1</span><span>3</span><span>:</span><span>1</span><span>5</span></div><div class="sd" style="left:14px;top:715px"><span>1</span><span>0</span><span>:</span><span>0</span><span>0</span></div><div class="sd" style="left:1134px;top:715px"><span>1</span><span>4</span><span>:</span><span>1</span><span>5</span></div><div class="sd" style="left:14px;top:781px"><span>1</span><span>1</span><span>:</span><span>0</span><span>0</span></div><div class="sd" style="left:1134px;top:781px"><span>1</span><span>5</span><span>:</span><span>1</span><span>5</span></div><div class="sd" style="left:44px;top:855px"><span>0</span><span>0</span></div><div class="sd" style="left:116px;top:855px"><span>0</span><span>1</span></div><div class="sd" style="left:188px;top:855px"><span>0</span><span>2</span></div><div class="sd" style="left:260px;top:855px"><span>0</span><span>3</span></div><div class="sd" style="left:332px;top:855px"><span>0</span><span>4</span></div><div class="sd" style="left:404px;top:855px"><span>0</span><span>5</span></div><div class="sd" style="left:476px;top:855px"><span>0</span><span>6</span></div><div class="sd" style="left:548px;top:855px"><span>0</span><span>7</span></div><div class="sd" style="left:620px;top:855px"><span>0</span><span>8</span></div><div class="sd" style="left:692px;top:855px"><span>0</span><span>9</span></div><div class="sd" style="left:764px;top:855px"><span>1</span><span>0</span></div><div class="sd" style="left:836px;top:855px"><span>1</span><span>1</span></div><div class="sd" style="left:908px;top:855px"><span>1</span><span>2</span></div><div class="sd" style="left:980px;top:855px"><span>1</span><span>3</span></div><div class="sd" style="left:1052px;top:855px"><span>1</span><span>4</span></div><div class="sd" style="left:1124px;top:855px"><span>1</span><span>5</span></div><div class="mb" style="left:555px;top:865px">TIME (MINUTES)</div><div class="sm" style="left:22px;top:869px">Each Vertical Division = 10000.00 microvolts</div><div class="sm" style="left:663px;top:869px">Traces clipped at plus/minus 5 vertical divisions</div><div class="sm" style="left:1176px;top:55px">-10759</div><div class="sm" style="left:1176px;top:71px">-10027</div><div class="sm" style="left:1181px;top:88px">-9865</div><div class="sm" style="left:1181px;top:88px">-8866</div><div class="sm" style="left:1181px;top:105px">-9113</div><div class="sm" style="left:1176px;top:121px">-12045</div><div class="sm" style="left:1176px;top:121px">-10945</div><div class="sm" style="left:1176px;top:137px">-12195</div><div class="sm" style="left:1176px;top:154px">-15080</div><div class="sm" style="left:1176px;top:154px">-15020</div><div class="sm" style="left:1176px;top:171px">-17800</div><div class="sm" style="left:1176px;top:187px">-18942</div><div class="sm" style="left:1176px;top:187px">-19842</div><div class="sm" style="left:1176px;top:203px">-20295</div><div class="sm" style="left:1176px;top:220px">-19646</div><div class="sm" style="left:1176px;top:220px">-19868</div><div class="sm" style="left:1176px;top:237px">-20309</div><div class="sm" style="left:1176px;top:253px">-21270</div><div class="sm" style="left:1176px;top:253px">-21220</div><div class="sm" style="left:1176px;top:269px">-21383</div><div class="sm" style="left:1176px;top:286px">-21558</div><div class="sm" style="left:1176px;top:286px">-21552</div><div class="sm" style="left:1176px;top:303px">-22067</div><div class="sm" style="left:1176px;top:319px">-21592</div><div class="sm" style="left:1176px;top:319px">-21698</div><div class="sm" style="left:1187px;top:50px">DC</div>
</body></html>
